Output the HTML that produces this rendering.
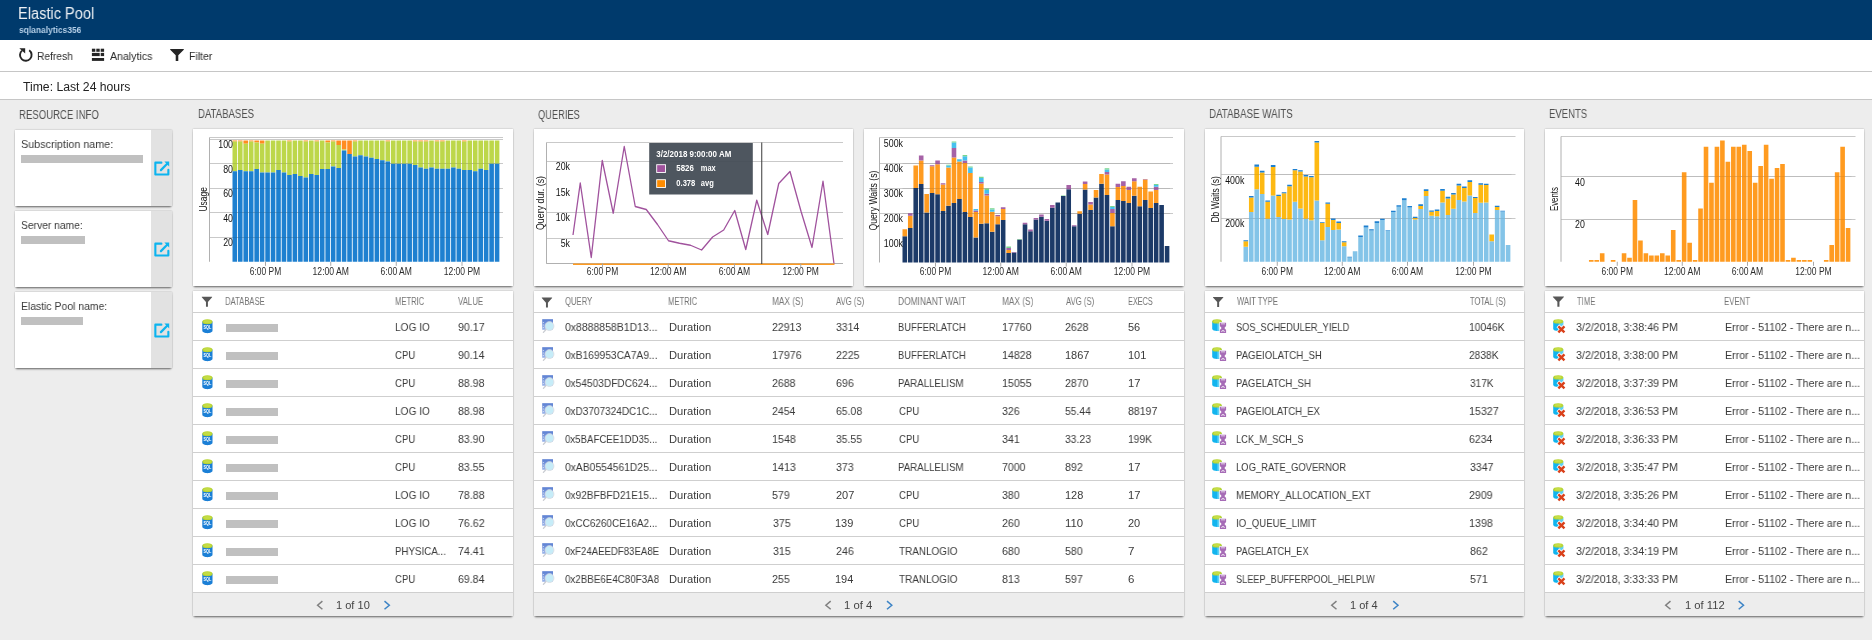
<!DOCTYPE html>
<html lang="en"><head><meta charset="utf-8"><title>Elastic Pool - sqlanalytics356</title>
<style>
html,body{margin:0;padding:0;}
body{width:1872px;height:640px;overflow:hidden;background:#ededed;font-family:"Liberation Sans",sans-serif;position:relative;}
.t{position:absolute;white-space:nowrap;line-height:1;transform-origin:0 0;display:block;}
.abs{position:absolute;}
#hdr{left:0;top:0;width:1872px;height:40px;background:#003a6c;}
#tool{left:0;top:40px;width:1872px;height:31px;background:#fff;border-bottom:1px solid #c6c6c6;}
#timebar{left:0;top:72px;width:1872px;height:27px;background:#fff;border-bottom:1px solid #c6c6c6;}
.panel{position:absolute;background:#fff;box-shadow:0 2px 2px -1px rgba(0,0,0,.55),0 0 1.5px rgba(0,0,0,.3);}
.row{position:absolute;left:0;height:27px;border-top:1px solid #cfcfcf;}
.pager{position:absolute;left:0;background:#ededed;border-top:1px solid #cfcfcf;}
.bar{position:absolute;background:#c0c0c0;}
svg{position:absolute;overflow:visible;}
#app{position:absolute;left:0;top:0;width:1872px;height:640px;will-change:transform;}
.t{will-change:transform;}
</style></head><body><div id="app">
<div id="hdr" class="abs">
<span class="t" style="left:18.30px;top:6.00px;font-size:16px;color:rgba(255,255,255,.93);transform:scaleX(0.9112);">Elastic Pool</span>
<span class="t" style="left:18.70px;top:25.00px;font-size:9.6px;color:#b4cfe8;transform:scaleX(0.8791);font-weight:bold;">sqlanalytics356</span>
</div>
<div id="tool" class="abs"></div>
<svg class="abs" style="left:18px;top:47px" width="16" height="16" viewBox="18 47 16 16">
<path d="M29.2 50.3 A5.8 5.8 0 1 1 22.0 50.6" fill="none" stroke="#252525" stroke-width="1.9"/>
<path d="M19.3 48.2 L25.2 48.2 L25.2 53.6 Z" fill="#252525"/></svg>
<span class="t" style="left:37.36px;top:51.00px;font-size:11px;color:#2a2a2a;transform:scaleX(0.9295);">Refresh</span>
<svg class="abs" style="left:91px;top:48px" width="14" height="14" viewBox="91 48 14 14" fill="#252525">
<rect x="91.9" y="48.7" width="3.4" height="3.1"/><rect x="96.3" y="48.7" width="3.4" height="3.1"/><rect x="100.7" y="48.7" width="3.4" height="3.1"/>
<rect x="91.9" y="52.9" width="7.8" height="3.2"/><rect x="100.7" y="52.9" width="3.4" height="3.2"/>
<rect x="91.9" y="58.0" width="12.2" height="2.9"/></svg>
<span class="t" style="left:110.08px;top:51.00px;font-size:11px;color:#2a2a2a;transform:scaleX(0.9633);">Analytics</span>
<svg class="abs" style="left:0;top:0" width="1" height="1"><path d="M170.20 49.10 L183.80 49.10 L183.80 49.69 L178.29 55.24 L178.29 60.90 L175.71 60.90 L175.71 55.24 L170.20 49.69 Z" fill="#252525"/></svg>
<span class="t" style="left:188.74px;top:51.00px;font-size:11px;color:#2a2a2a;transform:scaleX(0.9546);">Filter</span>
<div id="timebar" class="abs"></div>
<span class="t" style="left:23.13px;top:81.00px;font-size:12px;color:#222;transform:scaleX(1.0162);">Time: Last 24 hours</span>
<span class="t" style="left:19.01px;top:109.00px;font-size:12px;color:#505050;transform:scaleX(0.7984);">RESOURCE INFO</span>
<span class="t" style="left:197.61px;top:108.00px;font-size:12px;color:#505050;transform:scaleX(0.7975);">DATABASES</span>
<span class="t" style="left:538.06px;top:109.00px;font-size:12px;color:#505050;transform:scaleX(0.7732);">QUERIES</span>
<span class="t" style="left:1208.80px;top:108.00px;font-size:12px;color:#505050;transform:scaleX(0.8121);">DATABASE WAITS</span>
<span class="t" style="left:1548.62px;top:108.00px;font-size:12px;color:#505050;transform:scaleX(0.7939);">EVENTS</span>
<div class="panel" style="left:15px;top:130px;width:157px;height:76px;"><div class="abs" style="left:136px;top:0;width:21px;height:76px;background:#e2e2e2"></div></div>
<span class="t" style="left:21.11px;top:139.00px;font-size:11.5px;color:#3a3a3a;transform:scaleX(0.9373);">Subscription name:</span>
<div class="bar" style="left:21px;top:155px;width:122px;height:7.5px"></div>
<svg class="abs" style="left:154.2px;top:160.5px" width="17" height="16" viewBox="0 0 17 16"><path d="M7.4 1.65 H1.35 V13.55 H14.35 V8.8" fill="none" stroke="#0cb4ef" stroke-width="2.1" stroke-linejoin="round" stroke-linecap="round"/><path d="M6.9 9.1 L13.2 2.8" fill="none" stroke="#0cb4ef" stroke-width="2.2" stroke-linecap="round"/><path d="M10.4 0.6 H15.2 V5.4 Z" fill="#0cb4ef"/></svg>
<div class="panel" style="left:15px;top:211px;width:157px;height:76px;"><div class="abs" style="left:136px;top:0;width:21px;height:76px;background:#e2e2e2"></div></div>
<span class="t" style="left:21.13px;top:220.00px;font-size:11.5px;color:#3a3a3a;transform:scaleX(0.8939);">Server name:</span>
<div class="bar" style="left:21px;top:236px;width:63.9px;height:7.5px"></div>
<svg class="abs" style="left:154.2px;top:241.5px" width="17" height="16" viewBox="0 0 17 16"><path d="M7.4 1.65 H1.35 V13.55 H14.35 V8.8" fill="none" stroke="#0cb4ef" stroke-width="2.1" stroke-linejoin="round" stroke-linecap="round"/><path d="M6.9 9.1 L13.2 2.8" fill="none" stroke="#0cb4ef" stroke-width="2.2" stroke-linecap="round"/><path d="M10.4 0.6 H15.2 V5.4 Z" fill="#0cb4ef"/></svg>
<div class="panel" style="left:15px;top:292px;width:157px;height:76px;"><div class="abs" style="left:136px;top:0;width:21px;height:76px;background:#e2e2e2"></div></div>
<span class="t" style="left:20.75px;top:301.00px;font-size:11.5px;color:#3a3a3a;transform:scaleX(0.9051);">Elastic Pool name:</span>
<div class="bar" style="left:21px;top:317px;width:61.7px;height:7.5px"></div>
<svg class="abs" style="left:154.2px;top:322.5px" width="17" height="16" viewBox="0 0 17 16"><path d="M7.4 1.65 H1.35 V13.55 H14.35 V8.8" fill="none" stroke="#0cb4ef" stroke-width="2.1" stroke-linejoin="round" stroke-linecap="round"/><path d="M6.9 9.1 L13.2 2.8" fill="none" stroke="#0cb4ef" stroke-width="2.2" stroke-linecap="round"/><path d="M10.4 0.6 H15.2 V5.4 Z" fill="#0cb4ef"/></svg>
<div class="panel" style="left:193px;top:129px;width:320px;height:156.5px;"></div>
<svg class="abs" style="left:193px;top:129px" width="320" height="156.5" viewBox="193 129 320 156.5" font-family="Liberation Sans, sans-serif"><line x1="209.5" y1="137.5" x2="503" y2="137.5" stroke="#c9c9c9" stroke-width="1"/><line x1="209.5" y1="163.5" x2="503" y2="163.5" stroke="#c9c9c9" stroke-width="1"/><line x1="209.5" y1="188.5" x2="503" y2="188.5" stroke="#c9c9c9" stroke-width="1"/><line x1="209.5" y1="212.5" x2="503" y2="212.5" stroke="#c9c9c9" stroke-width="1"/><line x1="209.5" y1="237.5" x2="503" y2="237.5" stroke="#c9c9c9" stroke-width="1"/><line x1="209.5" y1="139.5" x2="503" y2="139.5" stroke="#c9c9c9" stroke-width="1"/><line x1="209.5" y1="137.5" x2="209.5" y2="261.75" stroke="#b0b0b0" stroke-width="1"/><rect x="232.50" y="140.50" width="4.6" height="1.00" fill="#ff8c21"/><rect x="232.50" y="141.50" width="4.6" height="29.75" fill="#bdd74a"/><rect x="232.50" y="171.25" width="4.6" height="90.50" fill="#1e80d0"/><rect x="237.96" y="140.50" width="4.6" height="1.00" fill="#ff8c21"/><rect x="237.96" y="141.50" width="4.6" height="28.50" fill="#bdd74a"/><rect x="237.96" y="170.00" width="4.6" height="91.75" fill="#1e80d0"/><rect x="243.43" y="140.50" width="4.6" height="3.20" fill="#ff8c21"/><rect x="243.43" y="143.70" width="4.6" height="27.55" fill="#bdd74a"/><rect x="243.43" y="171.25" width="4.6" height="90.50" fill="#1e80d0"/><rect x="248.89" y="140.50" width="4.6" height="1.00" fill="#ff8c21"/><rect x="248.89" y="141.50" width="4.6" height="29.75" fill="#bdd74a"/><rect x="248.89" y="171.25" width="4.6" height="90.50" fill="#1e80d0"/><rect x="254.36" y="140.50" width="4.6" height="2.00" fill="#ff8c21"/><rect x="254.36" y="142.50" width="4.6" height="26.50" fill="#bdd74a"/><rect x="254.36" y="169.00" width="4.6" height="92.75" fill="#1e80d0"/><rect x="259.82" y="140.50" width="4.6" height="3.20" fill="#ff8c21"/><rect x="259.82" y="143.70" width="4.6" height="28.80" fill="#bdd74a"/><rect x="259.82" y="172.50" width="4.6" height="89.25" fill="#1e80d0"/><rect x="265.28" y="140.50" width="4.6" height="32.00" fill="#bdd74a"/><rect x="265.28" y="172.50" width="4.6" height="89.25" fill="#1e80d0"/><rect x="270.75" y="140.50" width="4.6" height="32.00" fill="#bdd74a"/><rect x="270.75" y="172.50" width="4.6" height="89.25" fill="#1e80d0"/><rect x="276.21" y="140.50" width="4.6" height="29.50" fill="#bdd74a"/><rect x="276.21" y="170.00" width="4.6" height="91.75" fill="#1e80d0"/><rect x="281.68" y="140.50" width="4.6" height="32.00" fill="#bdd74a"/><rect x="281.68" y="172.50" width="4.6" height="89.25" fill="#1e80d0"/><rect x="287.14" y="140.50" width="4.6" height="1.00" fill="#ff8c21"/><rect x="287.14" y="141.50" width="4.6" height="33.50" fill="#bdd74a"/><rect x="287.14" y="175.00" width="4.6" height="86.75" fill="#1e80d0"/><rect x="292.60" y="140.50" width="4.6" height="33.50" fill="#bdd74a"/><rect x="292.60" y="174.00" width="4.6" height="87.75" fill="#1e80d0"/><rect x="298.07" y="140.50" width="4.6" height="35.50" fill="#bdd74a"/><rect x="298.07" y="176.00" width="4.6" height="85.75" fill="#1e80d0"/><rect x="303.53" y="140.50" width="4.6" height="1.00" fill="#ff8c21"/><rect x="303.53" y="141.50" width="4.6" height="36.00" fill="#bdd74a"/><rect x="303.53" y="177.50" width="4.6" height="84.25" fill="#1e80d0"/><rect x="309.00" y="140.50" width="4.6" height="33.50" fill="#bdd74a"/><rect x="309.00" y="174.00" width="4.6" height="87.75" fill="#1e80d0"/><rect x="314.46" y="140.50" width="4.6" height="1.00" fill="#ff8c21"/><rect x="314.46" y="141.50" width="4.6" height="33.50" fill="#bdd74a"/><rect x="314.46" y="175.00" width="4.6" height="86.75" fill="#1e80d0"/><rect x="319.92" y="140.50" width="4.6" height="28.50" fill="#bdd74a"/><rect x="319.92" y="169.00" width="4.6" height="92.75" fill="#1e80d0"/><rect x="325.39" y="140.50" width="4.6" height="2.00" fill="#ff8c21"/><rect x="325.39" y="142.50" width="4.6" height="26.50" fill="#bdd74a"/><rect x="325.39" y="169.00" width="4.6" height="92.75" fill="#1e80d0"/><rect x="330.85" y="140.50" width="4.6" height="1.00" fill="#ff8c21"/><rect x="330.85" y="141.50" width="4.6" height="25.00" fill="#bdd74a"/><rect x="330.85" y="166.50" width="4.6" height="95.25" fill="#1e80d0"/><rect x="336.32" y="140.50" width="4.6" height="4.50" fill="#ff8c21"/><rect x="336.32" y="145.00" width="4.6" height="23.00" fill="#bdd74a"/><rect x="336.32" y="168.00" width="4.6" height="93.75" fill="#1e80d0"/><rect x="341.78" y="140.50" width="4.6" height="9.00" fill="#ff8c21"/><rect x="341.78" y="149.50" width="4.6" height="1.00" fill="#bdd74a"/><rect x="341.78" y="150.50" width="4.6" height="111.25" fill="#1e80d0"/><rect x="347.24" y="140.50" width="4.6" height="13.50" fill="#ff8c21"/><rect x="347.24" y="154.00" width="4.6" height="107.75" fill="#1e80d0"/><rect x="352.71" y="140.50" width="4.6" height="1.00" fill="#ff8c21"/><rect x="352.71" y="141.50" width="4.6" height="15.00" fill="#bdd74a"/><rect x="352.71" y="156.50" width="4.6" height="105.25" fill="#1e80d0"/><rect x="358.17" y="140.50" width="4.6" height="14.75" fill="#bdd74a"/><rect x="358.17" y="155.25" width="4.6" height="106.50" fill="#1e80d0"/><rect x="363.64" y="140.50" width="4.6" height="16.00" fill="#bdd74a"/><rect x="363.64" y="156.50" width="4.6" height="105.25" fill="#1e80d0"/><rect x="369.10" y="140.50" width="4.6" height="17.25" fill="#bdd74a"/><rect x="369.10" y="157.75" width="4.6" height="104.00" fill="#1e80d0"/><rect x="374.56" y="140.50" width="4.6" height="18.50" fill="#bdd74a"/><rect x="374.56" y="159.00" width="4.6" height="102.75" fill="#1e80d0"/><rect x="380.03" y="140.50" width="4.6" height="19.75" fill="#bdd74a"/><rect x="380.03" y="160.25" width="4.6" height="101.50" fill="#1e80d0"/><rect x="385.49" y="140.50" width="4.6" height="1.00" fill="#ff8c21"/><rect x="385.49" y="141.50" width="4.6" height="20.00" fill="#bdd74a"/><rect x="385.49" y="161.50" width="4.6" height="100.25" fill="#1e80d0"/><rect x="390.96" y="140.50" width="4.6" height="23.25" fill="#bdd74a"/><rect x="390.96" y="163.75" width="4.6" height="98.00" fill="#1e80d0"/><rect x="396.42" y="140.50" width="4.6" height="23.25" fill="#bdd74a"/><rect x="396.42" y="163.75" width="4.6" height="98.00" fill="#1e80d0"/><rect x="401.88" y="140.50" width="4.6" height="23.25" fill="#bdd74a"/><rect x="401.88" y="163.75" width="4.6" height="98.00" fill="#1e80d0"/><rect x="407.35" y="140.50" width="4.6" height="23.25" fill="#bdd74a"/><rect x="407.35" y="163.75" width="4.6" height="98.00" fill="#1e80d0"/><rect x="412.81" y="140.50" width="4.6" height="1.00" fill="#ff8c21"/><rect x="412.81" y="141.50" width="4.6" height="23.50" fill="#bdd74a"/><rect x="412.81" y="165.00" width="4.6" height="96.75" fill="#1e80d0"/><rect x="418.28" y="140.50" width="4.6" height="1.00" fill="#ff8c21"/><rect x="418.28" y="141.50" width="4.6" height="26.00" fill="#bdd74a"/><rect x="418.28" y="167.50" width="4.6" height="94.25" fill="#1e80d0"/><rect x="423.74" y="140.50" width="4.6" height="1.00" fill="#ff8c21"/><rect x="423.74" y="141.50" width="4.6" height="27.25" fill="#bdd74a"/><rect x="423.74" y="168.75" width="4.6" height="93.00" fill="#1e80d0"/><rect x="429.20" y="140.50" width="4.6" height="27.00" fill="#bdd74a"/><rect x="429.20" y="167.50" width="4.6" height="94.25" fill="#1e80d0"/><rect x="434.67" y="140.50" width="4.6" height="1.00" fill="#ff8c21"/><rect x="434.67" y="141.50" width="4.6" height="27.25" fill="#bdd74a"/><rect x="434.67" y="168.75" width="4.6" height="93.00" fill="#1e80d0"/><rect x="440.13" y="140.50" width="4.6" height="1.00" fill="#ff8c21"/><rect x="440.13" y="141.50" width="4.6" height="27.25" fill="#bdd74a"/><rect x="440.13" y="168.75" width="4.6" height="93.00" fill="#1e80d0"/><rect x="445.60" y="140.50" width="4.6" height="28.25" fill="#bdd74a"/><rect x="445.60" y="168.75" width="4.6" height="93.00" fill="#1e80d0"/><rect x="451.06" y="140.50" width="4.6" height="27.00" fill="#bdd74a"/><rect x="451.06" y="167.50" width="4.6" height="94.25" fill="#1e80d0"/><rect x="456.52" y="140.50" width="4.6" height="28.25" fill="#bdd74a"/><rect x="456.52" y="168.75" width="4.6" height="93.00" fill="#1e80d0"/><rect x="461.99" y="140.50" width="4.6" height="1.00" fill="#ff8c21"/><rect x="461.99" y="141.50" width="4.6" height="28.50" fill="#bdd74a"/><rect x="461.99" y="170.00" width="4.6" height="91.75" fill="#1e80d0"/><rect x="467.45" y="140.50" width="4.6" height="29.50" fill="#bdd74a"/><rect x="467.45" y="170.00" width="4.6" height="91.75" fill="#1e80d0"/><rect x="472.92" y="140.50" width="4.6" height="30.75" fill="#bdd74a"/><rect x="472.92" y="171.25" width="4.6" height="90.50" fill="#1e80d0"/><rect x="478.38" y="140.50" width="4.6" height="28.25" fill="#bdd74a"/><rect x="478.38" y="168.75" width="4.6" height="93.00" fill="#1e80d0"/><rect x="483.84" y="140.50" width="4.6" height="29.50" fill="#bdd74a"/><rect x="483.84" y="170.00" width="4.6" height="91.75" fill="#1e80d0"/><rect x="489.31" y="140.50" width="4.6" height="23.25" fill="#bdd74a"/><rect x="489.31" y="163.75" width="4.6" height="98.00" fill="#1e80d0"/><rect x="494.77" y="140.50" width="4.6" height="23.25" fill="#bdd74a"/><rect x="494.77" y="163.75" width="4.6" height="98.00" fill="#1e80d0"/><line x1="232.5" y1="163.5" x2="500" y2="163.5" stroke="#000" stroke-opacity="0.08" stroke-width="1"/><line x1="232.5" y1="188.5" x2="500" y2="188.5" stroke="#000" stroke-opacity="0.08" stroke-width="1"/><line x1="232.5" y1="212.5" x2="500" y2="212.5" stroke="#000" stroke-opacity="0.08" stroke-width="1"/><line x1="232.5" y1="237.5" x2="500" y2="237.5" stroke="#000" stroke-opacity="0.08" stroke-width="1"/><text x="218.27" y="148.00" font-size="10.2" fill="#111" textLength="14.73" lengthAdjust="spacingAndGlyphs">100</text><text x="223.18" y="172.50" font-size="10.2" fill="#111" textLength="9.82" lengthAdjust="spacingAndGlyphs">80</text><text x="223.18" y="197.00" font-size="10.2" fill="#111" textLength="9.82" lengthAdjust="spacingAndGlyphs">60</text><text x="223.18" y="221.75" font-size="10.2" fill="#111" textLength="9.82" lengthAdjust="spacingAndGlyphs">40</text><text x="223.18" y="245.75" font-size="10.2" fill="#111" textLength="9.82" lengthAdjust="spacingAndGlyphs">20</text><text transform="translate(207.05 211.55) rotate(-90)" font-size="10" fill="#111" textLength="24.50" lengthAdjust="spacingAndGlyphs">Usage</text><text x="249.80" y="274.90" font-size="10" fill="#2c2c2c" textLength="31.40" lengthAdjust="spacingAndGlyphs">6:00 PM</text><line x1="265.5" y1="261.75" x2="265.5" y2="265.85" stroke="#a8a8a8" stroke-width="1"/><text x="312.55" y="274.90" font-size="10" fill="#2c2c2c" textLength="36.40" lengthAdjust="spacingAndGlyphs">12:00 AM</text><line x1="330.75" y1="261.75" x2="330.75" y2="265.85" stroke="#a8a8a8" stroke-width="1"/><text x="380.55" y="274.90" font-size="10" fill="#2c2c2c" textLength="31.40" lengthAdjust="spacingAndGlyphs">6:00 AM</text><line x1="396.25" y1="261.75" x2="396.25" y2="265.85" stroke="#a8a8a8" stroke-width="1"/><text x="443.80" y="274.90" font-size="10" fill="#2c2c2c" textLength="36.40" lengthAdjust="spacingAndGlyphs">12:00 PM</text><line x1="462" y1="261.75" x2="462" y2="265.85" stroke="#a8a8a8" stroke-width="1"/></svg>
<div class="panel" style="left:534px;top:129px;width:319px;height:156.5px;"></div>
<svg class="abs" style="left:534px;top:129px" width="320" height="156.5" viewBox="534 129 320 156.5" font-family="Liberation Sans, sans-serif"><line x1="546.5" y1="142.5" x2="843" y2="142.5" stroke="#c9c9c9" stroke-width="1"/><line x1="546.5" y1="161.5" x2="843" y2="161.5" stroke="#c9c9c9" stroke-width="1"/><line x1="546.5" y1="212.5" x2="843" y2="212.5" stroke="#c9c9c9" stroke-width="1"/><line x1="546.5" y1="238.5" x2="843" y2="238.5" stroke="#c9c9c9" stroke-width="1"/><line x1="546.5" y1="142.5" x2="546.5" y2="263.75" stroke="#b0b0b0" stroke-width="1"/><line x1="546.5" y1="263.5" x2="843" y2="263.5" stroke="#b0b0b0" stroke-width="1"/><polyline fill="none" stroke="#a0529d" stroke-width="1.3" stroke-linejoin="round" points="573,235 580.25,183 591.25,257.5 602.25,160.5 613.25,213.25 624.25,146.5 635.25,206.5 646.25,209.5 657.5,224.5 668.5,240.75 679.5,243.25 690.5,245.25 701.6,250 712.6,237 723.7,230 734.75,210.5 745.75,249.5 756.75,200.25 767.75,234.5 778.75,183.5 790,171.5 801,211.25 812,247.5 823,181.25 834,263.75"/><line x1="573" y1="264.2" x2="834.5" y2="264.2" stroke="#ff9b20" stroke-width="1.6"/><line x1="761.75" y1="142.5" x2="761.75" y2="264" stroke="#3a3a3a" stroke-width="1"/><text x="555.77" y="170.00" font-size="10.2" fill="#111" textLength="14.23" lengthAdjust="spacingAndGlyphs">20k</text><text x="555.77" y="195.50" font-size="10.2" fill="#111" textLength="14.23" lengthAdjust="spacingAndGlyphs">15k</text><text x="555.77" y="221.25" font-size="10.2" fill="#111" textLength="14.23" lengthAdjust="spacingAndGlyphs">10k</text><text x="560.68" y="246.75" font-size="10.2" fill="#111" textLength="9.32" lengthAdjust="spacingAndGlyphs">5k</text><text transform="translate(543.80 230.00) rotate(-90)" font-size="10" fill="#111" textLength="54.00" lengthAdjust="spacingAndGlyphs">Query dur. (s)</text><text x="586.80" y="274.90" font-size="10" fill="#2c2c2c" textLength="31.40" lengthAdjust="spacingAndGlyphs">6:00 PM</text><line x1="602.5" y1="263.75" x2="602.5" y2="267.85" stroke="#a8a8a8" stroke-width="1"/><text x="650.05" y="274.90" font-size="10" fill="#2c2c2c" textLength="36.40" lengthAdjust="spacingAndGlyphs">12:00 AM</text><line x1="668.25" y1="263.75" x2="668.25" y2="267.85" stroke="#a8a8a8" stroke-width="1"/><text x="718.80" y="274.90" font-size="10" fill="#2c2c2c" textLength="31.40" lengthAdjust="spacingAndGlyphs">6:00 AM</text><line x1="734.5" y1="263.75" x2="734.5" y2="267.85" stroke="#a8a8a8" stroke-width="1"/><text x="782.55" y="274.90" font-size="10" fill="#2c2c2c" textLength="36.40" lengthAdjust="spacingAndGlyphs">12:00 PM</text><line x1="800.75" y1="263.75" x2="800.75" y2="267.85" stroke="#a8a8a8" stroke-width="1"/><rect x="649.2" y="143" width="103.6" height="51.5" fill="#454d56" fill-opacity="0.95"/><text x="656.30" y="156.80" font-size="8.5" fill="#fff" textLength="75.00" lengthAdjust="spacingAndGlyphs" font-weight="bold">3/2/2018 9:00:00 AM</text><rect x="656.7" y="164.7" width="8.8" height="7.8" fill="#a0529d" stroke="#fff" stroke-width="0.9"/><rect x="656.7" y="179.7" width="8.8" height="7.8" fill="#ff8c00" stroke="#fff" stroke-width="0.9"/><text x="676.30" y="171.00" font-size="8.5" fill="#fff" textLength="17.50" lengthAdjust="spacingAndGlyphs" font-weight="bold">5826</text><text x="700.80" y="171.00" font-size="8.5" fill="#fff" textLength="14.90" lengthAdjust="spacingAndGlyphs" font-weight="bold">max</text><text x="676.30" y="185.90" font-size="8.5" fill="#fff" textLength="19.00" lengthAdjust="spacingAndGlyphs" font-weight="bold">0.378</text><text x="700.80" y="185.90" font-size="8.5" fill="#fff" textLength="13.00" lengthAdjust="spacingAndGlyphs" font-weight="bold">avg</text></svg>
<div class="panel" style="left:864px;top:129px;width:320px;height:156.5px;"></div>
<svg class="abs" style="left:864px;top:129px" width="320" height="156.5" viewBox="864 129 320 156.5" font-family="Liberation Sans, sans-serif"><line x1="879.5" y1="137.5" x2="1173" y2="137.5" stroke="#c9c9c9" stroke-width="1"/><line x1="879.5" y1="163.5" x2="1173" y2="163.5" stroke="#c9c9c9" stroke-width="1"/><line x1="879.5" y1="188.5" x2="1173" y2="188.5" stroke="#c9c9c9" stroke-width="1"/><line x1="879.5" y1="213.5" x2="1173" y2="213.5" stroke="#c9c9c9" stroke-width="1"/><line x1="879.5" y1="137.5" x2="879.5" y2="262.5" stroke="#b0b0b0" stroke-width="1"/><rect x="902.50" y="236.25" width="4.6" height="26.25" fill="#1c3a68"/><rect x="902.50" y="229.25" width="4.6" height="7.00" fill="#ff9b20"/><rect x="907.96" y="228.00" width="4.6" height="34.50" fill="#1c3a68"/><rect x="907.96" y="215.75" width="4.6" height="12.25" fill="#ff9b20"/><rect x="907.96" y="213.25" width="4.6" height="2.50" fill="#a662a6"/><rect x="913.43" y="188.00" width="4.6" height="74.50" fill="#1c3a68"/><rect x="913.43" y="165.50" width="4.6" height="22.50" fill="#ff9b20"/><rect x="918.89" y="184.00" width="4.6" height="78.50" fill="#1c3a68"/><rect x="918.89" y="160.50" width="4.6" height="23.50" fill="#ff9b20"/><rect x="918.89" y="155.50" width="4.6" height="5.00" fill="#a662a6"/><rect x="924.36" y="212.50" width="4.6" height="50.00" fill="#1c3a68"/><rect x="924.36" y="194.00" width="4.6" height="18.50" fill="#ff9b20"/><rect x="929.82" y="193.00" width="4.6" height="69.50" fill="#1c3a68"/><rect x="929.82" y="166.25" width="4.6" height="26.75" fill="#ff9b20"/><rect x="929.82" y="165.25" width="4.6" height="1.00" fill="#a662a6"/><rect x="935.28" y="194.25" width="4.6" height="68.25" fill="#1c3a68"/><rect x="935.28" y="164.25" width="4.6" height="30.00" fill="#ff9b20"/><rect x="935.28" y="160.50" width="4.6" height="3.75" fill="#a662a6"/><rect x="940.75" y="211.00" width="4.6" height="51.50" fill="#1c3a68"/><rect x="940.75" y="184.50" width="4.6" height="26.50" fill="#ff9b20"/><rect x="940.75" y="183.25" width="4.6" height="1.25" fill="#a662a6"/><rect x="946.21" y="205.75" width="4.6" height="56.75" fill="#1c3a68"/><rect x="946.21" y="167.50" width="4.6" height="38.25" fill="#ff9b20"/><rect x="946.21" y="165.50" width="4.6" height="2.00" fill="#45c1ee"/><rect x="946.21" y="164.75" width="4.6" height="0.75" fill="#78d68c"/><rect x="951.68" y="203.00" width="4.6" height="59.50" fill="#1c3a68"/><rect x="951.68" y="157.50" width="4.6" height="45.50" fill="#ff9b20"/><rect x="951.68" y="148.00" width="4.6" height="9.50" fill="#a662a6"/><rect x="951.68" y="142.50" width="4.6" height="5.50" fill="#45c1ee"/><rect x="951.68" y="141.50" width="4.6" height="1.00" fill="#78d68c"/><rect x="957.14" y="199.00" width="4.6" height="63.50" fill="#1c3a68"/><rect x="957.14" y="161.50" width="4.6" height="37.50" fill="#ff9b20"/><rect x="957.14" y="159.25" width="4.6" height="2.25" fill="#45c1ee"/><rect x="962.60" y="212.00" width="4.6" height="50.50" fill="#1c3a68"/><rect x="962.60" y="163.00" width="4.6" height="49.00" fill="#ff9b20"/><rect x="962.60" y="160.50" width="4.6" height="2.50" fill="#a662a6"/><rect x="962.60" y="156.25" width="4.6" height="4.25" fill="#45c1ee"/><rect x="962.60" y="155.00" width="4.6" height="1.25" fill="#78d68c"/><rect x="968.07" y="217.00" width="4.6" height="45.50" fill="#1c3a68"/><rect x="968.07" y="173.00" width="4.6" height="44.00" fill="#ff9b20"/><rect x="968.07" y="167.50" width="4.6" height="5.50" fill="#45c1ee"/><rect x="968.07" y="166.50" width="4.6" height="1.00" fill="#78d68c"/><rect x="973.53" y="237.50" width="4.6" height="25.00" fill="#1c3a68"/><rect x="973.53" y="212.00" width="4.6" height="25.50" fill="#ff9b20"/><rect x="973.53" y="210.50" width="4.6" height="1.50" fill="#a662a6"/><rect x="973.53" y="209.00" width="4.6" height="1.50" fill="#45c1ee"/><rect x="979.00" y="223.75" width="4.6" height="38.75" fill="#1c3a68"/><rect x="979.00" y="183.50" width="4.6" height="40.25" fill="#ff9b20"/><rect x="979.00" y="182.00" width="4.6" height="1.50" fill="#a662a6"/><rect x="979.00" y="178.00" width="4.6" height="4.00" fill="#45c1ee"/><rect x="979.00" y="176.75" width="4.6" height="1.25" fill="#78d68c"/><rect x="984.46" y="223.25" width="4.6" height="39.25" fill="#1c3a68"/><rect x="984.46" y="195.50" width="4.6" height="27.75" fill="#ff9b20"/><rect x="984.46" y="193.75" width="4.6" height="1.75" fill="#a662a6"/><rect x="984.46" y="190.00" width="4.6" height="3.75" fill="#45c1ee"/><rect x="984.46" y="188.50" width="4.6" height="1.50" fill="#78d68c"/><rect x="989.92" y="231.75" width="4.6" height="30.75" fill="#1c3a68"/><rect x="989.92" y="211.75" width="4.6" height="20.00" fill="#ff9b20"/><rect x="989.92" y="209.50" width="4.6" height="2.25" fill="#45c1ee"/><rect x="989.92" y="208.25" width="4.6" height="1.25" fill="#78d68c"/><rect x="995.39" y="224.25" width="4.6" height="38.25" fill="#1c3a68"/><rect x="995.39" y="216.25" width="4.6" height="8.00" fill="#ff9b20"/><rect x="995.39" y="215.00" width="4.6" height="1.25" fill="#a662a6"/><rect x="1000.85" y="220.00" width="4.6" height="42.50" fill="#1c3a68"/><rect x="1000.85" y="209.00" width="4.6" height="11.00" fill="#ff9b20"/><rect x="1000.85" y="207.25" width="4.6" height="1.75" fill="#a662a6"/><rect x="1006.32" y="253.00" width="4.6" height="9.50" fill="#1c3a68"/><rect x="1006.32" y="250.00" width="4.6" height="3.00" fill="#ff9b20"/><rect x="1006.32" y="248.00" width="4.6" height="2.00" fill="#a662a6"/><rect x="1006.32" y="246.50" width="4.6" height="1.50" fill="#78d68c"/><rect x="1011.78" y="252.50" width="4.6" height="10.00" fill="#1c3a68"/><rect x="1011.78" y="252.00" width="4.6" height="0.50" fill="#a662a6"/><rect x="1017.24" y="239.50" width="4.6" height="23.00" fill="#1c3a68"/><rect x="1017.24" y="239.00" width="4.6" height="0.50" fill="#78d68c"/><rect x="1022.71" y="224.25" width="4.6" height="38.25" fill="#1c3a68"/><rect x="1022.71" y="222.75" width="4.6" height="1.50" fill="#a662a6"/><rect x="1028.17" y="231.25" width="4.6" height="31.25" fill="#1c3a68"/><rect x="1028.17" y="229.50" width="4.6" height="1.75" fill="#a662a6"/><rect x="1033.64" y="219.50" width="4.6" height="43.00" fill="#1c3a68"/><rect x="1033.64" y="218.00" width="4.6" height="1.50" fill="#a662a6"/><rect x="1039.10" y="216.75" width="4.6" height="45.75" fill="#1c3a68"/><rect x="1039.10" y="214.50" width="4.6" height="2.25" fill="#a662a6"/><rect x="1044.56" y="220.75" width="4.6" height="41.75" fill="#1c3a68"/><rect x="1044.56" y="219.00" width="4.6" height="1.75" fill="#a662a6"/><rect x="1050.03" y="207.75" width="4.6" height="54.75" fill="#1c3a68"/><rect x="1050.03" y="205.00" width="4.6" height="2.75" fill="#a662a6"/><rect x="1055.49" y="202.50" width="4.6" height="60.00" fill="#1c3a68"/><rect x="1060.96" y="196.00" width="4.6" height="66.50" fill="#1c3a68"/><rect x="1060.96" y="195.50" width="4.6" height="0.50" fill="#78d68c"/><rect x="1066.42" y="189.25" width="4.6" height="73.25" fill="#1c3a68"/><rect x="1066.42" y="185.00" width="4.6" height="4.25" fill="#a662a6"/><rect x="1071.88" y="226.25" width="4.6" height="36.25" fill="#1c3a68"/><rect x="1071.88" y="225.25" width="4.6" height="1.00" fill="#a662a6"/><rect x="1077.35" y="213.75" width="4.6" height="48.75" fill="#1c3a68"/><rect x="1077.35" y="211.25" width="4.6" height="2.50" fill="#ff9b20"/><rect x="1082.81" y="189.50" width="4.6" height="73.00" fill="#1c3a68"/><rect x="1082.81" y="184.00" width="4.6" height="5.50" fill="#ff9b20"/><rect x="1082.81" y="181.50" width="4.6" height="2.50" fill="#a662a6"/><rect x="1088.28" y="210.00" width="4.6" height="52.50" fill="#1c3a68"/><rect x="1088.28" y="204.50" width="4.6" height="5.50" fill="#ff9b20"/><rect x="1088.28" y="202.00" width="4.6" height="2.50" fill="#a662a6"/><rect x="1093.74" y="197.50" width="4.6" height="65.00" fill="#1c3a68"/><rect x="1093.74" y="190.00" width="4.6" height="7.50" fill="#ff9b20"/><rect x="1099.20" y="183.75" width="4.6" height="78.75" fill="#1c3a68"/><rect x="1099.20" y="174.00" width="4.6" height="9.75" fill="#ff9b20"/><rect x="1104.67" y="195.00" width="4.6" height="67.50" fill="#1c3a68"/><rect x="1104.67" y="174.50" width="4.6" height="20.50" fill="#ff9b20"/><rect x="1104.67" y="172.00" width="4.6" height="2.50" fill="#a662a6"/><rect x="1104.67" y="169.50" width="4.6" height="2.50" fill="#45c1ee"/><rect x="1104.67" y="168.25" width="4.6" height="1.25" fill="#78d68c"/><rect x="1110.13" y="226.25" width="4.6" height="36.25" fill="#1c3a68"/><rect x="1110.13" y="213.00" width="4.6" height="13.25" fill="#ff9b20"/><rect x="1110.13" y="209.00" width="4.6" height="4.00" fill="#a662a6"/><rect x="1110.13" y="207.00" width="4.6" height="2.00" fill="#45c1ee"/><rect x="1110.13" y="206.00" width="4.6" height="1.00" fill="#78d68c"/><rect x="1115.60" y="200.00" width="4.6" height="62.50" fill="#1c3a68"/><rect x="1115.60" y="187.00" width="4.6" height="13.00" fill="#ff9b20"/><rect x="1115.60" y="183.75" width="4.6" height="3.25" fill="#a662a6"/><rect x="1121.06" y="201.00" width="4.6" height="61.50" fill="#1c3a68"/><rect x="1121.06" y="186.00" width="4.6" height="15.00" fill="#ff9b20"/><rect x="1121.06" y="181.25" width="4.6" height="4.75" fill="#a662a6"/><rect x="1126.52" y="203.00" width="4.6" height="59.50" fill="#1c3a68"/><rect x="1126.52" y="190.00" width="4.6" height="13.00" fill="#ff9b20"/><rect x="1126.52" y="186.75" width="4.6" height="3.25" fill="#a662a6"/><rect x="1131.99" y="195.75" width="4.6" height="66.75" fill="#1c3a68"/><rect x="1131.99" y="181.25" width="4.6" height="14.50" fill="#ff9b20"/><rect x="1131.99" y="178.25" width="4.6" height="3.00" fill="#a662a6"/><rect x="1137.45" y="206.25" width="4.6" height="56.25" fill="#1c3a68"/><rect x="1137.45" y="186.75" width="4.6" height="19.50" fill="#ff9b20"/><rect x="1142.92" y="200.00" width="4.6" height="62.50" fill="#1c3a68"/><rect x="1142.92" y="179.50" width="4.6" height="20.50" fill="#ff9b20"/><rect x="1142.92" y="179.00" width="4.6" height="0.50" fill="#a662a6"/><rect x="1148.38" y="208.00" width="4.6" height="54.50" fill="#1c3a68"/><rect x="1148.38" y="191.50" width="4.6" height="16.50" fill="#ff9b20"/><rect x="1153.84" y="203.00" width="4.6" height="59.50" fill="#1c3a68"/><rect x="1153.84" y="190.00" width="4.6" height="13.00" fill="#ff9b20"/><rect x="1153.84" y="186.75" width="4.6" height="3.25" fill="#a662a6"/><rect x="1153.84" y="185.00" width="4.6" height="1.75" fill="#45c1ee"/><rect x="1153.84" y="184.00" width="4.6" height="1.00" fill="#78d68c"/><rect x="1159.31" y="205.00" width="4.6" height="57.50" fill="#1c3a68"/><rect x="1164.77" y="246.00" width="4.6" height="16.50" fill="#1c3a68"/><line x1="902.5" y1="163.5" x2="1170" y2="163.5" stroke="#000" stroke-opacity="0.08" stroke-width="1"/><line x1="902.5" y1="188.5" x2="1170" y2="188.5" stroke="#000" stroke-opacity="0.08" stroke-width="1"/><line x1="902.5" y1="213.5" x2="1170" y2="213.5" stroke="#000" stroke-opacity="0.08" stroke-width="1"/><text x="883.86" y="147.00" font-size="10.2" fill="#111" textLength="19.14" lengthAdjust="spacingAndGlyphs">500k</text><text x="883.86" y="172.10" font-size="10.2" fill="#111" textLength="19.14" lengthAdjust="spacingAndGlyphs">400k</text><text x="883.86" y="197.00" font-size="10.2" fill="#111" textLength="19.14" lengthAdjust="spacingAndGlyphs">300k</text><text x="883.86" y="222.00" font-size="10.2" fill="#111" textLength="19.14" lengthAdjust="spacingAndGlyphs">200k</text><text x="883.86" y="247.00" font-size="10.2" fill="#111" textLength="19.14" lengthAdjust="spacingAndGlyphs">100k</text><text transform="translate(876.90 230.60) rotate(-90)" font-size="10" fill="#111" textLength="60.00" lengthAdjust="spacingAndGlyphs">Query Waits (s)</text><text x="919.80" y="274.90" font-size="10" fill="#2c2c2c" textLength="31.40" lengthAdjust="spacingAndGlyphs">6:00 PM</text><line x1="935.5" y1="262.5" x2="935.5" y2="266.6" stroke="#a8a8a8" stroke-width="1"/><text x="982.55" y="274.90" font-size="10" fill="#2c2c2c" textLength="36.40" lengthAdjust="spacingAndGlyphs">12:00 AM</text><line x1="1000.75" y1="262.5" x2="1000.75" y2="266.6" stroke="#a8a8a8" stroke-width="1"/><text x="1050.55" y="274.90" font-size="10" fill="#2c2c2c" textLength="31.40" lengthAdjust="spacingAndGlyphs">6:00 AM</text><line x1="1066.25" y1="262.5" x2="1066.25" y2="266.6" stroke="#a8a8a8" stroke-width="1"/><text x="1113.80" y="274.90" font-size="10" fill="#2c2c2c" textLength="36.40" lengthAdjust="spacingAndGlyphs">12:00 PM</text><line x1="1132" y1="262.5" x2="1132" y2="266.6" stroke="#a8a8a8" stroke-width="1"/></svg>
<div class="panel" style="left:1204.5px;top:129px;width:319.5px;height:156.5px;"></div>
<svg class="abs" style="left:1204.5px;top:129px" width="320" height="156.5" viewBox="1204.5 129 320 156.5" font-family="Liberation Sans, sans-serif"><line x1="1220.5" y1="136.5" x2="1515" y2="136.5" stroke="#c9c9c9" stroke-width="1"/><line x1="1220.5" y1="174.5" x2="1515" y2="174.5" stroke="#c9c9c9" stroke-width="1"/><line x1="1220.5" y1="218.5" x2="1515" y2="218.5" stroke="#c9c9c9" stroke-width="1"/><line x1="1220.5" y1="136.5" x2="1220.5" y2="261.75" stroke="#b0b0b0" stroke-width="1"/><rect x="1243.00" y="246.75" width="4.6" height="15.00" fill="#84c4e8"/><rect x="1243.00" y="241.25" width="4.6" height="5.50" fill="#fdb913"/><rect x="1243.00" y="240.25" width="4.6" height="1.00" fill="#1e80d0"/><rect x="1248.46" y="212.00" width="4.6" height="49.75" fill="#84c4e8"/><rect x="1248.46" y="197.50" width="4.6" height="14.50" fill="#fdb913"/><rect x="1248.46" y="196.00" width="4.6" height="1.50" fill="#1e80d0"/><rect x="1253.93" y="189.25" width="4.6" height="72.50" fill="#84c4e8"/><rect x="1253.93" y="166.75" width="4.6" height="22.50" fill="#fdb913"/><rect x="1253.93" y="164.50" width="4.6" height="2.25" fill="#1e80d0"/><rect x="1259.39" y="194.00" width="4.6" height="67.75" fill="#84c4e8"/><rect x="1259.39" y="172.50" width="4.6" height="21.50" fill="#fdb913"/><rect x="1259.39" y="170.75" width="4.6" height="1.75" fill="#1e80d0"/><rect x="1264.86" y="218.75" width="4.6" height="43.00" fill="#84c4e8"/><rect x="1264.86" y="201.75" width="4.6" height="17.00" fill="#fdb913"/><rect x="1264.86" y="200.50" width="4.6" height="1.25" fill="#1e80d0"/><rect x="1270.32" y="195.50" width="4.6" height="66.25" fill="#84c4e8"/><rect x="1270.32" y="167.00" width="4.6" height="28.50" fill="#fdb913"/><rect x="1270.32" y="165.00" width="4.6" height="2.00" fill="#1e80d0"/><rect x="1275.78" y="217.00" width="4.6" height="44.75" fill="#84c4e8"/><rect x="1275.78" y="196.00" width="4.6" height="21.00" fill="#fdb913"/><rect x="1275.78" y="194.75" width="4.6" height="1.25" fill="#1e80d0"/><rect x="1281.25" y="219.00" width="4.6" height="42.75" fill="#84c4e8"/><rect x="1281.25" y="193.25" width="4.6" height="25.75" fill="#fdb913"/><rect x="1281.25" y="192.25" width="4.6" height="1.00" fill="#1e80d0"/><rect x="1286.71" y="219.50" width="4.6" height="42.25" fill="#84c4e8"/><rect x="1286.71" y="186.25" width="4.6" height="33.25" fill="#fdb913"/><rect x="1286.71" y="184.75" width="4.6" height="1.50" fill="#1e80d0"/><rect x="1292.18" y="201.75" width="4.6" height="60.00" fill="#84c4e8"/><rect x="1292.18" y="170.25" width="4.6" height="31.50" fill="#fdb913"/><rect x="1292.18" y="169.00" width="4.6" height="1.25" fill="#1e80d0"/><rect x="1297.64" y="208.50" width="4.6" height="53.25" fill="#84c4e8"/><rect x="1297.64" y="171.50" width="4.6" height="37.00" fill="#fdb913"/><rect x="1297.64" y="170.25" width="4.6" height="1.25" fill="#1e80d0"/><rect x="1303.10" y="218.75" width="4.6" height="43.00" fill="#84c4e8"/><rect x="1303.10" y="176.50" width="4.6" height="42.25" fill="#fdb913"/><rect x="1303.10" y="175.00" width="4.6" height="1.50" fill="#1e80d0"/><rect x="1308.57" y="220.25" width="4.6" height="41.50" fill="#84c4e8"/><rect x="1308.57" y="177.25" width="4.6" height="43.00" fill="#fdb913"/><rect x="1308.57" y="176.00" width="4.6" height="1.25" fill="#1e80d0"/><rect x="1314.03" y="200.50" width="4.6" height="61.25" fill="#84c4e8"/><rect x="1314.03" y="142.50" width="4.6" height="58.00" fill="#fdb913"/><rect x="1314.03" y="141.00" width="4.6" height="1.50" fill="#1e80d0"/><rect x="1319.50" y="240.25" width="4.6" height="21.50" fill="#84c4e8"/><rect x="1319.50" y="223.00" width="4.6" height="17.25" fill="#fdb913"/><rect x="1319.50" y="222.25" width="4.6" height="0.75" fill="#1e80d0"/><rect x="1324.96" y="227.00" width="4.6" height="34.75" fill="#84c4e8"/><rect x="1324.96" y="203.75" width="4.6" height="23.25" fill="#fdb913"/><rect x="1324.96" y="202.50" width="4.6" height="1.25" fill="#1e80d0"/><rect x="1330.42" y="230.00" width="4.6" height="31.75" fill="#84c4e8"/><rect x="1330.42" y="220.00" width="4.6" height="10.00" fill="#fdb913"/><rect x="1330.42" y="218.50" width="4.6" height="1.50" fill="#1e80d0"/><rect x="1335.89" y="229.50" width="4.6" height="32.25" fill="#84c4e8"/><rect x="1335.89" y="223.00" width="4.6" height="6.50" fill="#fdb913"/><rect x="1335.89" y="221.50" width="4.6" height="1.50" fill="#1e80d0"/><rect x="1341.35" y="246.25" width="4.6" height="15.50" fill="#84c4e8"/><rect x="1341.35" y="242.25" width="4.6" height="4.00" fill="#fdb913"/><rect x="1341.35" y="241.25" width="4.6" height="1.00" fill="#1e80d0"/><rect x="1346.82" y="257.50" width="4.6" height="4.25" fill="#84c4e8"/><rect x="1346.82" y="256.75" width="4.6" height="0.75" fill="#1e80d0"/><rect x="1352.28" y="251.25" width="4.6" height="10.50" fill="#84c4e8"/><rect x="1357.74" y="237.00" width="4.6" height="24.75" fill="#84c4e8"/><rect x="1357.74" y="235.50" width="4.6" height="1.50" fill="#1e80d0"/><rect x="1363.21" y="227.50" width="4.6" height="34.25" fill="#84c4e8"/><rect x="1363.21" y="225.50" width="4.6" height="2.00" fill="#1e80d0"/><rect x="1368.67" y="230.50" width="4.6" height="31.25" fill="#84c4e8"/><rect x="1368.67" y="229.25" width="4.6" height="1.25" fill="#1e80d0"/><rect x="1374.14" y="223.00" width="4.6" height="38.75" fill="#84c4e8"/><rect x="1374.14" y="221.25" width="4.6" height="1.75" fill="#1e80d0"/><rect x="1379.60" y="220.00" width="4.6" height="41.75" fill="#84c4e8"/><rect x="1379.60" y="218.75" width="4.6" height="1.25" fill="#1e80d0"/><rect x="1385.06" y="230.50" width="4.6" height="31.25" fill="#84c4e8"/><rect x="1385.06" y="230.00" width="4.6" height="0.50" fill="#1e80d0"/><rect x="1390.53" y="212.00" width="4.6" height="49.75" fill="#84c4e8"/><rect x="1390.53" y="210.75" width="4.6" height="1.25" fill="#1e80d0"/><rect x="1395.99" y="206.75" width="4.6" height="55.00" fill="#84c4e8"/><rect x="1395.99" y="205.25" width="4.6" height="1.50" fill="#1e80d0"/><rect x="1401.46" y="200.25" width="4.6" height="61.50" fill="#84c4e8"/><rect x="1401.46" y="198.25" width="4.6" height="2.00" fill="#1e80d0"/><rect x="1406.92" y="207.50" width="4.6" height="54.25" fill="#84c4e8"/><rect x="1406.92" y="206.00" width="4.6" height="1.50" fill="#1e80d0"/><rect x="1412.38" y="219.50" width="4.6" height="42.25" fill="#84c4e8"/><rect x="1412.38" y="218.00" width="4.6" height="1.50" fill="#fdb913"/><rect x="1412.38" y="216.75" width="4.6" height="1.25" fill="#1e80d0"/><rect x="1417.85" y="209.00" width="4.6" height="52.75" fill="#84c4e8"/><rect x="1417.85" y="206.00" width="4.6" height="3.00" fill="#fdb913"/><rect x="1417.85" y="204.25" width="4.6" height="1.75" fill="#1e80d0"/><rect x="1423.31" y="196.00" width="4.6" height="65.75" fill="#84c4e8"/><rect x="1423.31" y="191.00" width="4.6" height="5.00" fill="#fdb913"/><rect x="1423.31" y="189.25" width="4.6" height="1.75" fill="#1e80d0"/><rect x="1428.78" y="215.75" width="4.6" height="46.00" fill="#84c4e8"/><rect x="1428.78" y="211.75" width="4.6" height="4.00" fill="#fdb913"/><rect x="1428.78" y="210.50" width="4.6" height="1.25" fill="#1e80d0"/><rect x="1434.24" y="216.25" width="4.6" height="45.50" fill="#84c4e8"/><rect x="1434.24" y="211.00" width="4.6" height="5.25" fill="#fdb913"/><rect x="1434.24" y="209.50" width="4.6" height="1.50" fill="#1e80d0"/><rect x="1439.70" y="202.50" width="4.6" height="59.25" fill="#84c4e8"/><rect x="1439.70" y="190.75" width="4.6" height="11.75" fill="#fdb913"/><rect x="1439.70" y="189.00" width="4.6" height="1.75" fill="#1e80d0"/><rect x="1445.17" y="215.00" width="4.6" height="46.75" fill="#84c4e8"/><rect x="1445.17" y="198.50" width="4.6" height="16.50" fill="#fdb913"/><rect x="1445.17" y="196.75" width="4.6" height="1.75" fill="#1e80d0"/><rect x="1450.63" y="208.75" width="4.6" height="53.00" fill="#84c4e8"/><rect x="1450.63" y="194.50" width="4.6" height="14.25" fill="#fdb913"/><rect x="1450.63" y="193.00" width="4.6" height="1.50" fill="#1e80d0"/><rect x="1456.10" y="200.00" width="4.6" height="61.75" fill="#84c4e8"/><rect x="1456.10" y="185.50" width="4.6" height="14.50" fill="#fdb913"/><rect x="1456.10" y="183.75" width="4.6" height="1.75" fill="#1e80d0"/><rect x="1461.56" y="201.50" width="4.6" height="60.25" fill="#84c4e8"/><rect x="1461.56" y="188.00" width="4.6" height="13.50" fill="#fdb913"/><rect x="1461.56" y="186.50" width="4.6" height="1.50" fill="#1e80d0"/><rect x="1467.02" y="195.50" width="4.6" height="66.25" fill="#84c4e8"/><rect x="1467.02" y="182.00" width="4.6" height="13.50" fill="#fdb913"/><rect x="1467.02" y="180.25" width="4.6" height="1.75" fill="#1e80d0"/><rect x="1472.49" y="213.00" width="4.6" height="48.75" fill="#84c4e8"/><rect x="1472.49" y="198.00" width="4.6" height="15.00" fill="#fdb913"/><rect x="1472.49" y="197.00" width="4.6" height="1.00" fill="#1e80d0"/><rect x="1477.95" y="202.75" width="4.6" height="59.00" fill="#84c4e8"/><rect x="1477.95" y="184.75" width="4.6" height="18.00" fill="#fdb913"/><rect x="1477.95" y="183.25" width="4.6" height="1.50" fill="#1e80d0"/><rect x="1483.42" y="202.50" width="4.6" height="59.25" fill="#84c4e8"/><rect x="1483.42" y="185.00" width="4.6" height="17.50" fill="#fdb913"/><rect x="1483.42" y="183.75" width="4.6" height="1.25" fill="#1e80d0"/><rect x="1488.88" y="241.25" width="4.6" height="20.50" fill="#84c4e8"/><rect x="1488.88" y="234.50" width="4.6" height="6.75" fill="#fdb913"/><rect x="1494.34" y="210.00" width="4.6" height="51.75" fill="#84c4e8"/><rect x="1494.34" y="207.00" width="4.6" height="3.00" fill="#fdb913"/><rect x="1494.34" y="205.75" width="4.6" height="1.25" fill="#1e80d0"/><rect x="1499.81" y="211.50" width="4.6" height="50.25" fill="#84c4e8"/><rect x="1499.81" y="210.75" width="4.6" height="0.75" fill="#1e80d0"/><rect x="1505.27" y="245.00" width="4.6" height="16.75" fill="#84c4e8"/><line x1="1243" y1="174.5" x2="1511" y2="174.5" stroke="#000" stroke-opacity="0.06" stroke-width="1"/><line x1="1243" y1="218.5" x2="1511" y2="218.5" stroke="#000" stroke-opacity="0.06" stroke-width="1"/><text x="1224.66" y="183.75" font-size="10.2" fill="#111" textLength="19.14" lengthAdjust="spacingAndGlyphs">400k</text><text x="1224.66" y="227.00" font-size="10.2" fill="#111" textLength="19.14" lengthAdjust="spacingAndGlyphs">200k</text><text transform="translate(1218.30 222.55) rotate(-90)" font-size="10" fill="#111" textLength="46.50" lengthAdjust="spacingAndGlyphs">Db Waits (s)</text><text x="1261.05" y="274.90" font-size="10" fill="#2c2c2c" textLength="31.40" lengthAdjust="spacingAndGlyphs">6:00 PM</text><line x1="1276.75" y1="261.75" x2="1276.75" y2="265.85" stroke="#a8a8a8" stroke-width="1"/><text x="1323.55" y="274.90" font-size="10" fill="#2c2c2c" textLength="36.40" lengthAdjust="spacingAndGlyphs">12:00 AM</text><line x1="1341.75" y1="261.75" x2="1341.75" y2="265.85" stroke="#a8a8a8" stroke-width="1"/><text x="1391.30" y="274.90" font-size="10" fill="#2c2c2c" textLength="31.40" lengthAdjust="spacingAndGlyphs">6:00 AM</text><line x1="1407" y1="261.75" x2="1407" y2="265.85" stroke="#a8a8a8" stroke-width="1"/><text x="1454.80" y="274.90" font-size="10" fill="#2c2c2c" textLength="36.40" lengthAdjust="spacingAndGlyphs">12:00 PM</text><line x1="1473" y1="261.75" x2="1473" y2="265.85" stroke="#a8a8a8" stroke-width="1"/></svg>
<div class="panel" style="left:1544.5px;top:129px;width:319.5px;height:156.5px;"></div>
<svg class="abs" style="left:1544.5px;top:129px" width="320" height="156.5" viewBox="1544.5 129 320 156.5" font-family="Liberation Sans, sans-serif"><line x1="1560.5" y1="136.5" x2="1855" y2="136.5" stroke="#c9c9c9" stroke-width="1"/><line x1="1560.5" y1="176.5" x2="1855" y2="176.5" stroke="#c9c9c9" stroke-width="1"/><line x1="1560.5" y1="219.5" x2="1855" y2="219.5" stroke="#c9c9c9" stroke-width="1"/><line x1="1560.5" y1="136.5" x2="1560.5" y2="261.75" stroke="#b0b0b0" stroke-width="1"/><rect x="1588.46" y="260.00" width="4.6" height="1.75" fill="#ff9b20"/><rect x="1593.93" y="260.00" width="4.6" height="1.75" fill="#ff9b20"/><rect x="1599.39" y="253.25" width="4.6" height="8.50" fill="#ff9b20"/><rect x="1610.32" y="260.00" width="4.6" height="1.75" fill="#ff9b20"/><rect x="1621.25" y="253.25" width="4.6" height="8.50" fill="#ff9b20"/><rect x="1626.71" y="257.75" width="4.6" height="4.00" fill="#ff9b20"/><rect x="1632.18" y="200.00" width="4.6" height="61.75" fill="#ff9b20"/><rect x="1637.64" y="240.50" width="4.6" height="21.25" fill="#ff9b20"/><rect x="1643.10" y="253.25" width="4.6" height="8.50" fill="#ff9b20"/><rect x="1648.57" y="255.50" width="4.6" height="6.25" fill="#ff9b20"/><rect x="1654.03" y="255.50" width="4.6" height="6.25" fill="#ff9b20"/><rect x="1659.50" y="253.25" width="4.6" height="8.50" fill="#ff9b20"/><rect x="1664.96" y="255.50" width="4.6" height="6.25" fill="#ff9b20"/><rect x="1670.42" y="230.00" width="4.6" height="31.75" fill="#ff9b20"/><rect x="1675.89" y="260.00" width="4.6" height="1.75" fill="#ff9b20"/><rect x="1681.35" y="172.25" width="4.6" height="89.50" fill="#ff9b20"/><rect x="1686.82" y="242.75" width="4.6" height="19.00" fill="#ff9b20"/><rect x="1692.28" y="260.00" width="4.6" height="1.75" fill="#ff9b20"/><rect x="1697.74" y="208.50" width="4.6" height="53.25" fill="#ff9b20"/><rect x="1703.21" y="146.75" width="4.6" height="115.00" fill="#ff9b20"/><rect x="1708.67" y="182.75" width="4.6" height="79.00" fill="#ff9b20"/><rect x="1714.14" y="146.75" width="4.6" height="115.00" fill="#ff9b20"/><rect x="1719.60" y="140.50" width="4.6" height="121.25" fill="#ff9b20"/><rect x="1725.06" y="161.75" width="4.6" height="100.00" fill="#ff9b20"/><rect x="1730.53" y="146.75" width="4.6" height="115.00" fill="#ff9b20"/><rect x="1735.99" y="146.75" width="4.6" height="115.00" fill="#ff9b20"/><rect x="1741.46" y="144.75" width="4.6" height="117.00" fill="#ff9b20"/><rect x="1746.92" y="151.00" width="4.6" height="110.75" fill="#ff9b20"/><rect x="1752.38" y="182.75" width="4.6" height="79.00" fill="#ff9b20"/><rect x="1757.85" y="166.00" width="4.6" height="95.75" fill="#ff9b20"/><rect x="1763.31" y="144.75" width="4.6" height="117.00" fill="#ff9b20"/><rect x="1768.78" y="178.75" width="4.6" height="83.00" fill="#ff9b20"/><rect x="1774.24" y="168.00" width="4.6" height="93.75" fill="#ff9b20"/><rect x="1779.70" y="164.00" width="4.6" height="97.75" fill="#ff9b20"/><rect x="1785.17" y="260.00" width="4.6" height="1.75" fill="#ff9b20"/><rect x="1790.63" y="257.75" width="4.6" height="4.00" fill="#ff9b20"/><rect x="1796.10" y="260.00" width="4.6" height="1.75" fill="#ff9b20"/><rect x="1801.56" y="260.00" width="4.6" height="1.75" fill="#ff9b20"/><rect x="1807.02" y="260.00" width="4.6" height="1.75" fill="#ff9b20"/><rect x="1823.42" y="260.00" width="4.6" height="1.75" fill="#ff9b20"/><rect x="1828.88" y="245.00" width="4.6" height="16.75" fill="#ff9b20"/><rect x="1834.34" y="172.25" width="4.6" height="89.50" fill="#ff9b20"/><rect x="1839.81" y="146.75" width="4.6" height="115.00" fill="#ff9b20"/><rect x="1845.27" y="228.00" width="4.6" height="33.75" fill="#ff9b20"/><line x1="1583" y1="176.5" x2="1851" y2="176.5" stroke="#000" stroke-opacity="0.06" stroke-width="1"/><line x1="1583" y1="219.5" x2="1851" y2="219.5" stroke="#000" stroke-opacity="0.06" stroke-width="1"/><text x="1574.48" y="185.50" font-size="10.2" fill="#111" textLength="9.82" lengthAdjust="spacingAndGlyphs">40</text><text x="1574.48" y="227.50" font-size="10.2" fill="#111" textLength="9.82" lengthAdjust="spacingAndGlyphs">20</text><text transform="translate(1557.55 211.10) rotate(-90)" font-size="10" fill="#111" textLength="24.00" lengthAdjust="spacingAndGlyphs">Events</text><text x="1601.05" y="274.90" font-size="10" fill="#2c2c2c" textLength="31.40" lengthAdjust="spacingAndGlyphs">6:00 PM</text><line x1="1616.75" y1="261.75" x2="1616.75" y2="265.85" stroke="#a8a8a8" stroke-width="1"/><text x="1663.55" y="274.90" font-size="10" fill="#2c2c2c" textLength="36.40" lengthAdjust="spacingAndGlyphs">12:00 AM</text><line x1="1681.75" y1="261.75" x2="1681.75" y2="265.85" stroke="#a8a8a8" stroke-width="1"/><text x="1731.30" y="274.90" font-size="10" fill="#2c2c2c" textLength="31.40" lengthAdjust="spacingAndGlyphs">6:00 AM</text><line x1="1747" y1="261.75" x2="1747" y2="265.85" stroke="#a8a8a8" stroke-width="1"/><text x="1794.80" y="274.90" font-size="10" fill="#2c2c2c" textLength="36.40" lengthAdjust="spacingAndGlyphs">12:00 PM</text><line x1="1813" y1="261.75" x2="1813" y2="265.85" stroke="#a8a8a8" stroke-width="1"/></svg>
<div class="panel" style="left:193px;top:291px;width:320px;height:325px;"><div class="row" style="top:21px;width:320px"></div><div class="row" style="top:49px;width:320px"></div><div class="row" style="top:77px;width:320px"></div><div class="row" style="top:105px;width:320px"></div><div class="row" style="top:133px;width:320px"></div><div class="row" style="top:161px;width:320px"></div><div class="row" style="top:189px;width:320px"></div><div class="row" style="top:217px;width:320px"></div><div class="row" style="top:245px;width:320px"></div><div class="row" style="top:273px;width:320px"></div><div class="pager" style="top:301px;width:320px;height:23px"></div></div>
<svg class="abs" style="left:0;top:0" width="1" height="1"><path d="M201.80 296.80 L212.10 296.80 L212.10 297.30 L207.93 302.00 L207.93 306.80 L205.97 306.80 L205.97 302.00 L201.80 297.30 Z" fill="#575757"/></svg>
<span class="t" style="left:224.87px;top:297.00px;font-size:10px;color:#757575;transform:scaleX(0.7665);">DATABASE</span>
<span class="t" style="left:395.07px;top:297.00px;font-size:10px;color:#757575;transform:scaleX(0.7649);">METRIC</span>
<span class="t" style="left:457.97px;top:297.00px;font-size:10px;color:#757575;transform:scaleX(0.7822);">VALUE</span>
<svg class="abs" style="left:201.7px;top:318.9px" width="11" height="14.5" viewBox="0 0 11 14.5" font-family="Liberation Sans, sans-serif"><path d="M0.3 2.6 V11.6 C0.3 13.4 3 14.2 5.4 14.2 C7.8 14.2 10.5 13.4 10.5 11.6 V2.6 Z" fill="#1b7fd6"/><ellipse cx="5.4" cy="2.7" rx="5.1" ry="2.5" fill="#b8d432"/><ellipse cx="5.4" cy="2.5" rx="3.6" ry="1.5" fill="#c4dc45"/><text x="1.5" y="10.4" font-size="4.6" font-weight="bold" fill="#fff" textLength="7.8" lengthAdjust="spacingAndGlyphs">SQL</text></svg>
<div class="bar" style="left:225.8px;top:324.2px;width:52px;height:7.6px"></div>
<span class="t" style="left:394.87px;top:322.00px;font-size:11px;color:#3a3a3a;transform:scaleX(0.9213);">LOG IO</span>
<span class="t" style="left:457.90px;top:322.00px;font-size:11px;color:#3a3a3a;transform:scaleX(0.9675);">90.17</span>
<svg class="abs" style="left:201.7px;top:346.9px" width="11" height="14.5" viewBox="0 0 11 14.5" font-family="Liberation Sans, sans-serif"><path d="M0.3 2.6 V11.6 C0.3 13.4 3 14.2 5.4 14.2 C7.8 14.2 10.5 13.4 10.5 11.6 V2.6 Z" fill="#1b7fd6"/><ellipse cx="5.4" cy="2.7" rx="5.1" ry="2.5" fill="#b8d432"/><ellipse cx="5.4" cy="2.5" rx="3.6" ry="1.5" fill="#c4dc45"/><text x="1.5" y="10.4" font-size="4.6" font-weight="bold" fill="#fff" textLength="7.8" lengthAdjust="spacingAndGlyphs">SQL</text></svg>
<div class="bar" style="left:225.8px;top:352.2px;width:52px;height:7.6px"></div>
<span class="t" style="left:395.21px;top:350.00px;font-size:11px;color:#3a3a3a;transform:scaleX(0.8754);">CPU</span>
<span class="t" style="left:457.91px;top:350.00px;font-size:11px;color:#3a3a3a;transform:scaleX(0.9592);">90.14</span>
<svg class="abs" style="left:201.7px;top:374.9px" width="11" height="14.5" viewBox="0 0 11 14.5" font-family="Liberation Sans, sans-serif"><path d="M0.3 2.6 V11.6 C0.3 13.4 3 14.2 5.4 14.2 C7.8 14.2 10.5 13.4 10.5 11.6 V2.6 Z" fill="#1b7fd6"/><ellipse cx="5.4" cy="2.7" rx="5.1" ry="2.5" fill="#b8d432"/><ellipse cx="5.4" cy="2.5" rx="3.6" ry="1.5" fill="#c4dc45"/><text x="1.5" y="10.4" font-size="4.6" font-weight="bold" fill="#fff" textLength="7.8" lengthAdjust="spacingAndGlyphs">SQL</text></svg>
<div class="bar" style="left:225.8px;top:380.2px;width:52px;height:7.6px"></div>
<span class="t" style="left:395.21px;top:378.00px;font-size:11px;color:#3a3a3a;transform:scaleX(0.8754);">CPU</span>
<span class="t" style="left:457.94px;top:378.00px;font-size:11px;color:#3a3a3a;transform:scaleX(0.9634);">88.98</span>
<svg class="abs" style="left:201.7px;top:402.9px" width="11" height="14.5" viewBox="0 0 11 14.5" font-family="Liberation Sans, sans-serif"><path d="M0.3 2.6 V11.6 C0.3 13.4 3 14.2 5.4 14.2 C7.8 14.2 10.5 13.4 10.5 11.6 V2.6 Z" fill="#1b7fd6"/><ellipse cx="5.4" cy="2.7" rx="5.1" ry="2.5" fill="#b8d432"/><ellipse cx="5.4" cy="2.5" rx="3.6" ry="1.5" fill="#c4dc45"/><text x="1.5" y="10.4" font-size="4.6" font-weight="bold" fill="#fff" textLength="7.8" lengthAdjust="spacingAndGlyphs">SQL</text></svg>
<div class="bar" style="left:225.8px;top:408.2px;width:52px;height:7.6px"></div>
<span class="t" style="left:394.87px;top:406.00px;font-size:11px;color:#3a3a3a;transform:scaleX(0.9213);">LOG IO</span>
<span class="t" style="left:457.94px;top:406.00px;font-size:11px;color:#3a3a3a;transform:scaleX(0.9634);">88.98</span>
<svg class="abs" style="left:201.7px;top:430.9px" width="11" height="14.5" viewBox="0 0 11 14.5" font-family="Liberation Sans, sans-serif"><path d="M0.3 2.6 V11.6 C0.3 13.4 3 14.2 5.4 14.2 C7.8 14.2 10.5 13.4 10.5 11.6 V2.6 Z" fill="#1b7fd6"/><ellipse cx="5.4" cy="2.7" rx="5.1" ry="2.5" fill="#b8d432"/><ellipse cx="5.4" cy="2.5" rx="3.6" ry="1.5" fill="#c4dc45"/><text x="1.5" y="10.4" font-size="4.6" font-weight="bold" fill="#fff" textLength="7.8" lengthAdjust="spacingAndGlyphs">SQL</text></svg>
<div class="bar" style="left:225.8px;top:436.2px;width:52px;height:7.6px"></div>
<span class="t" style="left:395.21px;top:434.00px;font-size:11px;color:#3a3a3a;transform:scaleX(0.8754);">CPU</span>
<span class="t" style="left:457.94px;top:434.00px;font-size:11px;color:#3a3a3a;transform:scaleX(0.9617);">83.90</span>
<svg class="abs" style="left:201.7px;top:458.9px" width="11" height="14.5" viewBox="0 0 11 14.5" font-family="Liberation Sans, sans-serif"><path d="M0.3 2.6 V11.6 C0.3 13.4 3 14.2 5.4 14.2 C7.8 14.2 10.5 13.4 10.5 11.6 V2.6 Z" fill="#1b7fd6"/><ellipse cx="5.4" cy="2.7" rx="5.1" ry="2.5" fill="#b8d432"/><ellipse cx="5.4" cy="2.5" rx="3.6" ry="1.5" fill="#c4dc45"/><text x="1.5" y="10.4" font-size="4.6" font-weight="bold" fill="#fff" textLength="7.8" lengthAdjust="spacingAndGlyphs">SQL</text></svg>
<div class="bar" style="left:225.8px;top:464.2px;width:52px;height:7.6px"></div>
<span class="t" style="left:395.21px;top:462.00px;font-size:11px;color:#3a3a3a;transform:scaleX(0.8754);">CPU</span>
<span class="t" style="left:457.94px;top:462.00px;font-size:11px;color:#3a3a3a;transform:scaleX(0.9629);">83.55</span>
<svg class="abs" style="left:201.7px;top:486.9px" width="11" height="14.5" viewBox="0 0 11 14.5" font-family="Liberation Sans, sans-serif"><path d="M0.3 2.6 V11.6 C0.3 13.4 3 14.2 5.4 14.2 C7.8 14.2 10.5 13.4 10.5 11.6 V2.6 Z" fill="#1b7fd6"/><ellipse cx="5.4" cy="2.7" rx="5.1" ry="2.5" fill="#b8d432"/><ellipse cx="5.4" cy="2.5" rx="3.6" ry="1.5" fill="#c4dc45"/><text x="1.5" y="10.4" font-size="4.6" font-weight="bold" fill="#fff" textLength="7.8" lengthAdjust="spacingAndGlyphs">SQL</text></svg>
<div class="bar" style="left:225.8px;top:492.2px;width:52px;height:7.6px"></div>
<span class="t" style="left:394.87px;top:490.00px;font-size:11px;color:#3a3a3a;transform:scaleX(0.9213);">LOG IO</span>
<span class="t" style="left:457.85px;top:490.00px;font-size:11px;color:#3a3a3a;transform:scaleX(0.9666);">78.88</span>
<svg class="abs" style="left:201.7px;top:514.9px" width="11" height="14.5" viewBox="0 0 11 14.5" font-family="Liberation Sans, sans-serif"><path d="M0.3 2.6 V11.6 C0.3 13.4 3 14.2 5.4 14.2 C7.8 14.2 10.5 13.4 10.5 11.6 V2.6 Z" fill="#1b7fd6"/><ellipse cx="5.4" cy="2.7" rx="5.1" ry="2.5" fill="#b8d432"/><ellipse cx="5.4" cy="2.5" rx="3.6" ry="1.5" fill="#c4dc45"/><text x="1.5" y="10.4" font-size="4.6" font-weight="bold" fill="#fff" textLength="7.8" lengthAdjust="spacingAndGlyphs">SQL</text></svg>
<div class="bar" style="left:225.8px;top:520.2px;width:52px;height:7.6px"></div>
<span class="t" style="left:394.87px;top:518.00px;font-size:11px;color:#3a3a3a;transform:scaleX(0.9213);">LOG IO</span>
<span class="t" style="left:457.85px;top:518.00px;font-size:11px;color:#3a3a3a;transform:scaleX(0.9693);">76.62</span>
<svg class="abs" style="left:201.7px;top:542.9px" width="11" height="14.5" viewBox="0 0 11 14.5" font-family="Liberation Sans, sans-serif"><path d="M0.3 2.6 V11.6 C0.3 13.4 3 14.2 5.4 14.2 C7.8 14.2 10.5 13.4 10.5 11.6 V2.6 Z" fill="#1b7fd6"/><ellipse cx="5.4" cy="2.7" rx="5.1" ry="2.5" fill="#b8d432"/><ellipse cx="5.4" cy="2.5" rx="3.6" ry="1.5" fill="#c4dc45"/><text x="1.5" y="10.4" font-size="4.6" font-weight="bold" fill="#fff" textLength="7.8" lengthAdjust="spacingAndGlyphs">SQL</text></svg>
<div class="bar" style="left:225.8px;top:548.2px;width:52px;height:7.6px"></div>
<span class="t" style="left:394.90px;top:546.00px;font-size:11px;color:#3a3a3a;transform:scaleX(0.8856);">PHYSICA...</span>
<span class="t" style="left:457.85px;top:546.00px;font-size:11px;color:#3a3a3a;transform:scaleX(0.9687);">74.41</span>
<svg class="abs" style="left:201.7px;top:570.9px" width="11" height="14.5" viewBox="0 0 11 14.5" font-family="Liberation Sans, sans-serif"><path d="M0.3 2.6 V11.6 C0.3 13.4 3 14.2 5.4 14.2 C7.8 14.2 10.5 13.4 10.5 11.6 V2.6 Z" fill="#1b7fd6"/><ellipse cx="5.4" cy="2.7" rx="5.1" ry="2.5" fill="#b8d432"/><ellipse cx="5.4" cy="2.5" rx="3.6" ry="1.5" fill="#c4dc45"/><text x="1.5" y="10.4" font-size="4.6" font-weight="bold" fill="#fff" textLength="7.8" lengthAdjust="spacingAndGlyphs">SQL</text></svg>
<div class="bar" style="left:225.8px;top:576.2px;width:52px;height:7.6px"></div>
<span class="t" style="left:395.21px;top:574.00px;font-size:11px;color:#3a3a3a;transform:scaleX(0.8754);">CPU</span>
<span class="t" style="left:457.86px;top:574.00px;font-size:11px;color:#3a3a3a;transform:scaleX(0.9607);">69.84</span>
<span class="t" style="left:336.36px;top:600.00px;font-size:11px;color:#444;transform:scaleX(1.0040);">1 of 10</span><svg class="abs" style="left:0;top:0" width="1" height="1"><path d="M322.40 601.10 L317.60 605.20 L322.40 609.30" fill="none" stroke="#808080" stroke-width="1.5"/></svg><svg class="abs" style="left:0;top:0" width="1" height="1"><path d="M384.50 601.10 L389.30 605.20 L384.50 609.30" fill="none" stroke="#3d84c6" stroke-width="1.5"/></svg>
<div class="panel" style="left:534px;top:291px;width:650px;height:325px;"><div class="row" style="top:21px;width:650px"></div><div class="row" style="top:49px;width:650px"></div><div class="row" style="top:77px;width:650px"></div><div class="row" style="top:105px;width:650px"></div><div class="row" style="top:133px;width:650px"></div><div class="row" style="top:161px;width:650px"></div><div class="row" style="top:189px;width:650px"></div><div class="row" style="top:217px;width:650px"></div><div class="row" style="top:245px;width:650px"></div><div class="row" style="top:273px;width:650px"></div><div class="pager" style="top:301px;width:650px;height:23px"></div></div>
<svg class="abs" style="left:0;top:0" width="1" height="1"><path d="M541.80 297.60 L552.10 297.60 L552.10 298.10 L547.93 302.80 L547.93 307.60 L545.97 307.60 L545.97 302.80 L541.80 298.10 Z" fill="#575757"/></svg>
<span class="t" style="left:565.44px;top:297.00px;font-size:10px;color:#757575;transform:scaleX(0.7668);">QUERY</span>
<span class="t" style="left:668.37px;top:297.00px;font-size:10px;color:#757575;transform:scaleX(0.7649);">METRIC</span>
<span class="t" style="left:772.22px;top:297.00px;font-size:10px;color:#757575;transform:scaleX(0.8283);">MAX (S)</span>
<span class="t" style="left:836.08px;top:297.00px;font-size:10px;color:#757575;transform:scaleX(0.7700);">AVG (S)</span>
<span class="t" style="left:898.41px;top:297.00px;font-size:10px;color:#757575;transform:scaleX(0.8427);">DOMINANT WAIT</span>
<span class="t" style="left:1002.12px;top:297.00px;font-size:10px;color:#757575;transform:scaleX(0.8283);">MAX (S)</span>
<span class="t" style="left:1065.68px;top:297.00px;font-size:10px;color:#757575;transform:scaleX(0.7700);">AVG (S)</span>
<span class="t" style="left:1128.30px;top:297.00px;font-size:10px;color:#757575;transform:scaleX(0.7295);">EXECS</span>
<svg class="abs" style="left:542.2px;top:318.8px" width="13" height="14.5" viewBox="0 0 13 14.5"><defs><linearGradient id="qg" x1="0" y1="0" x2="0" y2="1"><stop offset="0" stop-color="#5a7fd2"/><stop offset="1" stop-color="#9db6ea"/></linearGradient></defs><rect x="0.2" y="0.2" width="10.8" height="10.6" fill="url(#qg)"/><rect x="0.9" y="3.2" width="0.8" height="0.8" fill="#fff"/><rect x="0.9" y="5.6" width="0.8" height="0.8" fill="#fff"/><rect x="0.9" y="8" width="0.8" height="0.8" fill="#fff"/><path d="M4.3 10.3 L1.4 13.4" stroke="#c9ccd2" stroke-width="1.3" stroke-linecap="round"/><circle cx="7.5" cy="7.1" r="4.4" fill="#c6ecf8" stroke="#d9dde3" stroke-width="0.9"/></svg>
<span class="t" style="left:565.39px;top:322.00px;font-size:11px;color:#3a3a3a;transform:scaleX(0.9508);">0x8888858B1D13...</span>
<span class="t" style="left:668.59px;top:322.00px;font-size:11px;color:#3a3a3a;transform:scaleX(1.0135);">Duration</span>
<span class="t" style="left:772.37px;top:322.00px;font-size:11px;color:#3a3a3a;transform:scaleX(0.9610);">22913</span>
<span class="t" style="left:835.70px;top:322.00px;font-size:11px;color:#3a3a3a;transform:scaleX(0.9532);">3314</span>
<span class="t" style="left:898.33px;top:322.00px;font-size:11px;color:#3a3a3a;transform:scaleX(0.8548);">BUFFERLATCH</span>
<span class="t" style="left:1001.99px;top:322.00px;font-size:11px;color:#3a3a3a;transform:scaleX(0.9686);">17760</span>
<span class="t" style="left:1065.17px;top:322.00px;font-size:11px;color:#3a3a3a;transform:scaleX(0.9650);">2628</span>
<span class="t" style="left:1128.47px;top:322.00px;font-size:11px;color:#3a3a3a;transform:scaleX(0.9777);">56</span>
<svg class="abs" style="left:542.2px;top:346.8px" width="13" height="14.5" viewBox="0 0 13 14.5"><defs><linearGradient id="qg" x1="0" y1="0" x2="0" y2="1"><stop offset="0" stop-color="#5a7fd2"/><stop offset="1" stop-color="#9db6ea"/></linearGradient></defs><rect x="0.2" y="0.2" width="10.8" height="10.6" fill="url(#qg)"/><rect x="0.9" y="3.2" width="0.8" height="0.8" fill="#fff"/><rect x="0.9" y="5.6" width="0.8" height="0.8" fill="#fff"/><rect x="0.9" y="8" width="0.8" height="0.8" fill="#fff"/><path d="M4.3 10.3 L1.4 13.4" stroke="#c9ccd2" stroke-width="1.3" stroke-linecap="round"/><circle cx="7.5" cy="7.1" r="4.4" fill="#c6ecf8" stroke="#d9dde3" stroke-width="0.9"/></svg>
<span class="t" style="left:565.40px;top:350.00px;font-size:11px;color:#3a3a3a;transform:scaleX(0.9272);">0xB169953CA7A9...</span>
<span class="t" style="left:668.59px;top:350.00px;font-size:11px;color:#3a3a3a;transform:scaleX(1.0135);">Duration</span>
<span class="t" style="left:772.09px;top:350.00px;font-size:11px;color:#3a3a3a;transform:scaleX(0.9703);">17976</span>
<span class="t" style="left:835.57px;top:350.00px;font-size:11px;color:#3a3a3a;transform:scaleX(0.9643);">2225</span>
<span class="t" style="left:898.33px;top:350.00px;font-size:11px;color:#3a3a3a;transform:scaleX(0.8548);">BUFFERLATCH</span>
<span class="t" style="left:1001.99px;top:350.00px;font-size:11px;color:#3a3a3a;transform:scaleX(0.9702);">14828</span>
<span class="t" style="left:1064.88px;top:350.00px;font-size:11px;color:#3a3a3a;transform:scaleX(0.9801);">1867</span>
<span class="t" style="left:1128.07px;top:350.00px;font-size:11px;color:#3a3a3a;transform:scaleX(0.9918);">101</span>
<svg class="abs" style="left:542.2px;top:374.8px" width="13" height="14.5" viewBox="0 0 13 14.5"><defs><linearGradient id="qg" x1="0" y1="0" x2="0" y2="1"><stop offset="0" stop-color="#5a7fd2"/><stop offset="1" stop-color="#9db6ea"/></linearGradient></defs><rect x="0.2" y="0.2" width="10.8" height="10.6" fill="url(#qg)"/><rect x="0.9" y="3.2" width="0.8" height="0.8" fill="#fff"/><rect x="0.9" y="5.6" width="0.8" height="0.8" fill="#fff"/><rect x="0.9" y="8" width="0.8" height="0.8" fill="#fff"/><path d="M4.3 10.3 L1.4 13.4" stroke="#c9ccd2" stroke-width="1.3" stroke-linecap="round"/><circle cx="7.5" cy="7.1" r="4.4" fill="#c6ecf8" stroke="#d9dde3" stroke-width="0.9"/></svg>
<span class="t" style="left:565.40px;top:378.00px;font-size:11px;color:#3a3a3a;transform:scaleX(0.9216);">0x54503DFDC624...</span>
<span class="t" style="left:668.59px;top:378.00px;font-size:11px;color:#3a3a3a;transform:scaleX(1.0135);">Duration</span>
<span class="t" style="left:772.37px;top:378.00px;font-size:11px;color:#3a3a3a;transform:scaleX(0.9650);">2688</span>
<span class="t" style="left:835.56px;top:378.00px;font-size:11px;color:#3a3a3a;transform:scaleX(0.9728);">696</span>
<span class="t" style="left:898.30px;top:378.00px;font-size:11px;color:#3a3a3a;transform:scaleX(0.8818);">PARALLELISM</span>
<span class="t" style="left:1001.99px;top:378.00px;font-size:11px;color:#3a3a3a;transform:scaleX(0.9696);">15055</span>
<span class="t" style="left:1065.17px;top:378.00px;font-size:11px;color:#3a3a3a;transform:scaleX(0.9630);">2870</span>
<span class="t" style="left:1128.05px;top:378.00px;font-size:11px;color:#3a3a3a;transform:scaleX(1.0199);">17</span>
<svg class="abs" style="left:542.2px;top:402.8px" width="13" height="14.5" viewBox="0 0 13 14.5"><defs><linearGradient id="qg" x1="0" y1="0" x2="0" y2="1"><stop offset="0" stop-color="#5a7fd2"/><stop offset="1" stop-color="#9db6ea"/></linearGradient></defs><rect x="0.2" y="0.2" width="10.8" height="10.6" fill="url(#qg)"/><rect x="0.9" y="3.2" width="0.8" height="0.8" fill="#fff"/><rect x="0.9" y="5.6" width="0.8" height="0.8" fill="#fff"/><rect x="0.9" y="8" width="0.8" height="0.8" fill="#fff"/><path d="M4.3 10.3 L1.4 13.4" stroke="#c9ccd2" stroke-width="1.3" stroke-linecap="round"/><circle cx="7.5" cy="7.1" r="4.4" fill="#c6ecf8" stroke="#d9dde3" stroke-width="0.9"/></svg>
<span class="t" style="left:565.41px;top:406.00px;font-size:11px;color:#3a3a3a;transform:scaleX(0.9104);">0xD3707324DC1C...</span>
<span class="t" style="left:668.59px;top:406.00px;font-size:11px;color:#3a3a3a;transform:scaleX(1.0135);">Duration</span>
<span class="t" style="left:772.37px;top:406.00px;font-size:11px;color:#3a3a3a;transform:scaleX(0.9586);">2454</span>
<span class="t" style="left:835.57px;top:406.00px;font-size:11px;color:#3a3a3a;transform:scaleX(0.9483);">65.08</span>
<span class="t" style="left:898.61px;top:406.00px;font-size:11px;color:#3a3a3a;transform:scaleX(0.8754);">CPU</span>
<span class="t" style="left:1002.40px;top:406.00px;font-size:11px;color:#3a3a3a;transform:scaleX(0.9650);">326</span>
<span class="t" style="left:1065.29px;top:406.00px;font-size:11px;color:#3a3a3a;transform:scaleX(0.9385);">55.44</span>
<span class="t" style="left:1128.44px;top:406.00px;font-size:11px;color:#3a3a3a;transform:scaleX(0.9608);">88197</span>
<svg class="abs" style="left:542.2px;top:430.8px" width="13" height="14.5" viewBox="0 0 13 14.5"><defs><linearGradient id="qg" x1="0" y1="0" x2="0" y2="1"><stop offset="0" stop-color="#5a7fd2"/><stop offset="1" stop-color="#9db6ea"/></linearGradient></defs><rect x="0.2" y="0.2" width="10.8" height="10.6" fill="url(#qg)"/><rect x="0.9" y="3.2" width="0.8" height="0.8" fill="#fff"/><rect x="0.9" y="5.6" width="0.8" height="0.8" fill="#fff"/><rect x="0.9" y="8" width="0.8" height="0.8" fill="#fff"/><path d="M4.3 10.3 L1.4 13.4" stroke="#c9ccd2" stroke-width="1.3" stroke-linecap="round"/><circle cx="7.5" cy="7.1" r="4.4" fill="#c6ecf8" stroke="#d9dde3" stroke-width="0.9"/></svg>
<span class="t" style="left:565.42px;top:434.00px;font-size:11px;color:#3a3a3a;transform:scaleX(0.8783);">0x5BAFCEE1DD35...</span>
<span class="t" style="left:668.59px;top:434.00px;font-size:11px;color:#3a3a3a;transform:scaleX(1.0135);">Duration</span>
<span class="t" style="left:772.08px;top:434.00px;font-size:11px;color:#3a3a3a;transform:scaleX(0.9769);">1548</span>
<span class="t" style="left:835.71px;top:434.00px;font-size:11px;color:#3a3a3a;transform:scaleX(0.9427);">35.55</span>
<span class="t" style="left:898.61px;top:434.00px;font-size:11px;color:#3a3a3a;transform:scaleX(0.8754);">CPU</span>
<span class="t" style="left:1002.39px;top:434.00px;font-size:11px;color:#3a3a3a;transform:scaleX(0.9679);">341</span>
<span class="t" style="left:1065.30px;top:434.00px;font-size:11px;color:#3a3a3a;transform:scaleX(0.9435);">33.23</span>
<span class="t" style="left:1128.12px;top:434.00px;font-size:11px;color:#3a3a3a;transform:scaleX(0.9357);">199K</span>
<svg class="abs" style="left:542.2px;top:458.8px" width="13" height="14.5" viewBox="0 0 13 14.5"><defs><linearGradient id="qg" x1="0" y1="0" x2="0" y2="1"><stop offset="0" stop-color="#5a7fd2"/><stop offset="1" stop-color="#9db6ea"/></linearGradient></defs><rect x="0.2" y="0.2" width="10.8" height="10.6" fill="url(#qg)"/><rect x="0.9" y="3.2" width="0.8" height="0.8" fill="#fff"/><rect x="0.9" y="5.6" width="0.8" height="0.8" fill="#fff"/><rect x="0.9" y="8" width="0.8" height="0.8" fill="#fff"/><path d="M4.3 10.3 L1.4 13.4" stroke="#c9ccd2" stroke-width="1.3" stroke-linecap="round"/><circle cx="7.5" cy="7.1" r="4.4" fill="#c6ecf8" stroke="#d9dde3" stroke-width="0.9"/></svg>
<span class="t" style="left:565.40px;top:462.00px;font-size:11px;color:#3a3a3a;transform:scaleX(0.9389);">0xAB0554561D25...</span>
<span class="t" style="left:668.59px;top:462.00px;font-size:11px;color:#3a3a3a;transform:scaleX(1.0135);">Duration</span>
<span class="t" style="left:772.08px;top:462.00px;font-size:11px;color:#3a3a3a;transform:scaleX(0.9771);">1413</span>
<span class="t" style="left:835.70px;top:462.00px;font-size:11px;color:#3a3a3a;transform:scaleX(0.9650);">373</span>
<span class="t" style="left:898.30px;top:462.00px;font-size:11px;color:#3a3a3a;transform:scaleX(0.8818);">PARALLELISM</span>
<span class="t" style="left:1002.26px;top:462.00px;font-size:11px;color:#3a3a3a;transform:scaleX(0.9635);">7000</span>
<span class="t" style="left:1065.24px;top:462.00px;font-size:11px;color:#3a3a3a;transform:scaleX(0.9722);">892</span>
<span class="t" style="left:1128.05px;top:462.00px;font-size:11px;color:#3a3a3a;transform:scaleX(1.0199);">17</span>
<svg class="abs" style="left:542.2px;top:486.8px" width="13" height="14.5" viewBox="0 0 13 14.5"><defs><linearGradient id="qg" x1="0" y1="0" x2="0" y2="1"><stop offset="0" stop-color="#5a7fd2"/><stop offset="1" stop-color="#9db6ea"/></linearGradient></defs><rect x="0.2" y="0.2" width="10.8" height="10.6" fill="url(#qg)"/><rect x="0.9" y="3.2" width="0.8" height="0.8" fill="#fff"/><rect x="0.9" y="5.6" width="0.8" height="0.8" fill="#fff"/><rect x="0.9" y="8" width="0.8" height="0.8" fill="#fff"/><path d="M4.3 10.3 L1.4 13.4" stroke="#c9ccd2" stroke-width="1.3" stroke-linecap="round"/><circle cx="7.5" cy="7.1" r="4.4" fill="#c6ecf8" stroke="#d9dde3" stroke-width="0.9"/></svg>
<span class="t" style="left:565.41px;top:490.00px;font-size:11px;color:#3a3a3a;transform:scaleX(0.9160);">0x92BFBFD21E15...</span>
<span class="t" style="left:668.59px;top:490.00px;font-size:11px;color:#3a3a3a;transform:scaleX(1.0135);">Duration</span>
<span class="t" style="left:772.47px;top:490.00px;font-size:11px;color:#3a3a3a;transform:scaleX(0.9682);">579</span>
<span class="t" style="left:835.56px;top:490.00px;font-size:11px;color:#3a3a3a;transform:scaleX(0.9764);">207</span>
<span class="t" style="left:898.61px;top:490.00px;font-size:11px;color:#3a3a3a;transform:scaleX(0.8754);">CPU</span>
<span class="t" style="left:1002.40px;top:490.00px;font-size:11px;color:#3a3a3a;transform:scaleX(0.9620);">380</span>
<span class="t" style="left:1064.87px;top:490.00px;font-size:11px;color:#3a3a3a;transform:scaleX(0.9884);">128</span>
<span class="t" style="left:1128.05px;top:490.00px;font-size:11px;color:#3a3a3a;transform:scaleX(1.0199);">17</span>
<svg class="abs" style="left:542.2px;top:514.8px" width="13" height="14.5" viewBox="0 0 13 14.5"><defs><linearGradient id="qg" x1="0" y1="0" x2="0" y2="1"><stop offset="0" stop-color="#5a7fd2"/><stop offset="1" stop-color="#9db6ea"/></linearGradient></defs><rect x="0.2" y="0.2" width="10.8" height="10.6" fill="url(#qg)"/><rect x="0.9" y="3.2" width="0.8" height="0.8" fill="#fff"/><rect x="0.9" y="5.6" width="0.8" height="0.8" fill="#fff"/><rect x="0.9" y="8" width="0.8" height="0.8" fill="#fff"/><path d="M4.3 10.3 L1.4 13.4" stroke="#c9ccd2" stroke-width="1.3" stroke-linecap="round"/><circle cx="7.5" cy="7.1" r="4.4" fill="#c6ecf8" stroke="#d9dde3" stroke-width="0.9"/></svg>
<span class="t" style="left:565.41px;top:518.00px;font-size:11px;color:#3a3a3a;transform:scaleX(0.9048);">0xCC6260CE16A2...</span>
<span class="t" style="left:668.59px;top:518.00px;font-size:11px;color:#3a3a3a;transform:scaleX(1.0135);">Duration</span>
<span class="t" style="left:772.50px;top:518.00px;font-size:11px;color:#3a3a3a;transform:scaleX(0.9638);">375</span>
<span class="t" style="left:835.27px;top:518.00px;font-size:11px;color:#3a3a3a;transform:scaleX(0.9909);">139</span>
<span class="t" style="left:898.61px;top:518.00px;font-size:11px;color:#3a3a3a;transform:scaleX(0.8754);">CPU</span>
<span class="t" style="left:1002.26px;top:518.00px;font-size:11px;color:#3a3a3a;transform:scaleX(0.9694);">260</span>
<span class="t" style="left:1064.83px;top:518.00px;font-size:11px;color:#3a3a3a;transform:scaleX(1.0351);">110</span>
<span class="t" style="left:1128.36px;top:518.00px;font-size:11px;color:#3a3a3a;transform:scaleX(0.9829);">20</span>
<svg class="abs" style="left:542.2px;top:542.8px" width="13" height="14.5" viewBox="0 0 13 14.5"><defs><linearGradient id="qg" x1="0" y1="0" x2="0" y2="1"><stop offset="0" stop-color="#5a7fd2"/><stop offset="1" stop-color="#9db6ea"/></linearGradient></defs><rect x="0.2" y="0.2" width="10.8" height="10.6" fill="url(#qg)"/><rect x="0.9" y="3.2" width="0.8" height="0.8" fill="#fff"/><rect x="0.9" y="5.6" width="0.8" height="0.8" fill="#fff"/><rect x="0.9" y="8" width="0.8" height="0.8" fill="#fff"/><path d="M4.3 10.3 L1.4 13.4" stroke="#c9ccd2" stroke-width="1.3" stroke-linecap="round"/><circle cx="7.5" cy="7.1" r="4.4" fill="#c6ecf8" stroke="#d9dde3" stroke-width="0.9"/></svg>
<span class="t" style="left:565.42px;top:546.00px;font-size:11px;color:#3a3a3a;transform:scaleX(0.8743);">0xF24AEEDF83EA8E</span>
<span class="t" style="left:668.59px;top:546.00px;font-size:11px;color:#3a3a3a;transform:scaleX(1.0135);">Duration</span>
<span class="t" style="left:772.50px;top:546.00px;font-size:11px;color:#3a3a3a;transform:scaleX(0.9638);">315</span>
<span class="t" style="left:835.56px;top:546.00px;font-size:11px;color:#3a3a3a;transform:scaleX(0.9725);">246</span>
<span class="t" style="left:898.88px;top:546.00px;font-size:11px;color:#3a3a3a;transform:scaleX(0.9014);">TRANLOGIO</span>
<span class="t" style="left:1002.26px;top:546.00px;font-size:11px;color:#3a3a3a;transform:scaleX(0.9697);">680</span>
<span class="t" style="left:1065.28px;top:546.00px;font-size:11px;color:#3a3a3a;transform:scaleX(0.9632);">580</span>
<span class="t" style="left:1128.30px;top:546.00px;font-size:11px;color:#3a3a3a;transform:scaleX(1.0559);">7</span>
<svg class="abs" style="left:542.2px;top:570.8px" width="13" height="14.5" viewBox="0 0 13 14.5"><defs><linearGradient id="qg" x1="0" y1="0" x2="0" y2="1"><stop offset="0" stop-color="#5a7fd2"/><stop offset="1" stop-color="#9db6ea"/></linearGradient></defs><rect x="0.2" y="0.2" width="10.8" height="10.6" fill="url(#qg)"/><rect x="0.9" y="3.2" width="0.8" height="0.8" fill="#fff"/><rect x="0.9" y="5.6" width="0.8" height="0.8" fill="#fff"/><rect x="0.9" y="8" width="0.8" height="0.8" fill="#fff"/><path d="M4.3 10.3 L1.4 13.4" stroke="#c9ccd2" stroke-width="1.3" stroke-linecap="round"/><circle cx="7.5" cy="7.1" r="4.4" fill="#c6ecf8" stroke="#d9dde3" stroke-width="0.9"/></svg>
<span class="t" style="left:565.42px;top:574.00px;font-size:11px;color:#3a3a3a;transform:scaleX(0.8895);">0x2BBE6E4C80F3A8</span>
<span class="t" style="left:668.59px;top:574.00px;font-size:11px;color:#3a3a3a;transform:scaleX(1.0135);">Duration</span>
<span class="t" style="left:772.36px;top:574.00px;font-size:11px;color:#3a3a3a;transform:scaleX(0.9712);">255</span>
<span class="t" style="left:835.28px;top:574.00px;font-size:11px;color:#3a3a3a;transform:scaleX(0.9794);">194</span>
<span class="t" style="left:898.88px;top:574.00px;font-size:11px;color:#3a3a3a;transform:scaleX(0.9014);">TRANLOGIO</span>
<span class="t" style="left:1002.34px;top:574.00px;font-size:11px;color:#3a3a3a;transform:scaleX(0.9682);">813</span>
<span class="t" style="left:1065.27px;top:574.00px;font-size:11px;color:#3a3a3a;transform:scaleX(0.9700);">597</span>
<span class="t" style="left:1128.32px;top:574.00px;font-size:11px;color:#3a3a3a;transform:scaleX(1.0402);">6</span>
<span class="t" style="left:844.44px;top:600.00px;font-size:11px;color:#444;transform:scaleX(1.0242);">1 of 4</span><svg class="abs" style="left:0;top:0" width="1" height="1"><path d="M830.70 601.10 L825.90 605.20 L830.70 609.30" fill="none" stroke="#808080" stroke-width="1.5"/></svg><svg class="abs" style="left:0;top:0" width="1" height="1"><path d="M887.00 601.10 L891.80 605.20 L887.00 609.30" fill="none" stroke="#3d84c6" stroke-width="1.5"/></svg>
<div class="panel" style="left:1204.5px;top:291px;width:319.5px;height:325px;"><div class="row" style="top:21px;width:319.5px"></div><div class="row" style="top:49px;width:319.5px"></div><div class="row" style="top:77px;width:319.5px"></div><div class="row" style="top:105px;width:319.5px"></div><div class="row" style="top:133px;width:319.5px"></div><div class="row" style="top:161px;width:319.5px"></div><div class="row" style="top:189px;width:319.5px"></div><div class="row" style="top:217px;width:319.5px"></div><div class="row" style="top:245px;width:319.5px"></div><div class="row" style="top:273px;width:319.5px"></div><div class="pager" style="top:301px;width:319.5px;height:23px"></div></div>
<svg class="abs" style="left:0;top:0" width="1" height="1"><path d="M1213.00 296.90 L1223.30 296.90 L1223.30 297.40 L1219.13 302.10 L1219.13 306.90 L1217.17 306.90 L1217.17 302.10 L1213.00 297.40 Z" fill="#575757"/></svg>
<span class="t" style="left:1236.87px;top:297.00px;font-size:10px;color:#757575;transform:scaleX(0.7687);">WAIT TYPE</span>
<span class="t" style="left:1469.83px;top:297.00px;font-size:10px;color:#757575;transform:scaleX(0.7576);">TOTAL (S)</span>
<svg class="abs" style="left:1212px;top:318.7px" width="15" height="14.5" viewBox="0 0 15 14.5"><path d="M0.2 2.4 V9.8 C0.2 11.2 2.6 12 5 12 C7.4 12 9.8 11.2 9.8 9.8 V2.4 Z" fill="#12b4ee"/><path d="M5.4 2.4 V12 C7.6 11.9 9.8 11.1 9.8 9.8 V2.4 Z" fill="#5fd0f5"/><ellipse cx="5" cy="2.4" rx="4.8" ry="2.2" fill="#b8d432"/><ellipse cx="5" cy="2.3" rx="3.3" ry="1.3" fill="#c6de48"/><rect x="7.3" y="3.1" width="7.4" height="11.4" fill="#fff"/><path d="M7.9 3.7 H14.1 V6.9 L12.4 8.9 L14.1 10.9 V14.1 H7.9 V10.9 L9.6 8.9 L7.9 6.9 Z" fill="#a66bb6"/><path d="M9.2 13.0 C9.4 11.9 10.3 11.3 11.0 11.1 C11.7 11.3 12.6 11.9 12.8 13.0 L12.0 13.0 C11.8 12.4 11.4 12.1 11.0 12.0 C10.6 12.1 10.2 12.4 10.0 13.0 Z" fill="#fff" opacity=".85"/><rect x="9.0" y="4.4" width="4.0" height="0.9" fill="#fff" opacity=".75"/></svg>
<span class="t" style="left:1236.48px;top:322.00px;font-size:11px;color:#3a3a3a;transform:scaleX(0.8383);">SOS_SCHEDULER_YIELD</span>
<span class="t" style="left:1469.21px;top:322.00px;font-size:11px;color:#3a3a3a;transform:scaleX(0.9387);">10046K</span>
<svg class="abs" style="left:1212px;top:346.7px" width="15" height="14.5" viewBox="0 0 15 14.5"><path d="M0.2 2.4 V9.8 C0.2 11.2 2.6 12 5 12 C7.4 12 9.8 11.2 9.8 9.8 V2.4 Z" fill="#12b4ee"/><path d="M5.4 2.4 V12 C7.6 11.9 9.8 11.1 9.8 9.8 V2.4 Z" fill="#5fd0f5"/><ellipse cx="5" cy="2.4" rx="4.8" ry="2.2" fill="#b8d432"/><ellipse cx="5" cy="2.3" rx="3.3" ry="1.3" fill="#c6de48"/><rect x="7.3" y="3.1" width="7.4" height="11.4" fill="#fff"/><path d="M7.9 3.7 H14.1 V6.9 L12.4 8.9 L14.1 10.9 V14.1 H7.9 V10.9 L9.6 8.9 L7.9 6.9 Z" fill="#a66bb6"/><path d="M9.2 13.0 C9.4 11.9 10.3 11.3 11.0 11.1 C11.7 11.3 12.6 11.9 12.8 13.0 L12.0 13.0 C11.8 12.4 11.4 12.1 11.0 12.0 C10.6 12.1 10.2 12.4 10.0 13.0 Z" fill="#fff" opacity=".85"/><rect x="9.0" y="4.4" width="4.0" height="0.9" fill="#fff" opacity=".75"/></svg>
<span class="t" style="left:1236.11px;top:350.00px;font-size:11px;color:#3a3a3a;transform:scaleX(0.8762);">PAGEIOLATCH_SH</span>
<span class="t" style="left:1469.49px;top:350.00px;font-size:11px;color:#3a3a3a;transform:scaleX(0.9289);">2838K</span>
<svg class="abs" style="left:1212px;top:374.7px" width="15" height="14.5" viewBox="0 0 15 14.5"><path d="M0.2 2.4 V9.8 C0.2 11.2 2.6 12 5 12 C7.4 12 9.8 11.2 9.8 9.8 V2.4 Z" fill="#12b4ee"/><path d="M5.4 2.4 V12 C7.6 11.9 9.8 11.1 9.8 9.8 V2.4 Z" fill="#5fd0f5"/><ellipse cx="5" cy="2.4" rx="4.8" ry="2.2" fill="#b8d432"/><ellipse cx="5" cy="2.3" rx="3.3" ry="1.3" fill="#c6de48"/><rect x="7.3" y="3.1" width="7.4" height="11.4" fill="#fff"/><path d="M7.9 3.7 H14.1 V6.9 L12.4 8.9 L14.1 10.9 V14.1 H7.9 V10.9 L9.6 8.9 L7.9 6.9 Z" fill="#a66bb6"/><path d="M9.2 13.0 C9.4 11.9 10.3 11.3 11.0 11.1 C11.7 11.3 12.6 11.9 12.8 13.0 L12.0 13.0 C11.8 12.4 11.4 12.1 11.0 12.0 C10.6 12.1 10.2 12.4 10.0 13.0 Z" fill="#fff" opacity=".85"/><rect x="9.0" y="4.4" width="4.0" height="0.9" fill="#fff" opacity=".75"/></svg>
<span class="t" style="left:1236.12px;top:378.00px;font-size:11px;color:#3a3a3a;transform:scaleX(0.8665);">PAGELATCH_SH</span>
<span class="t" style="left:1469.61px;top:378.00px;font-size:11px;color:#3a3a3a;transform:scaleX(0.9201);">317K</span>
<svg class="abs" style="left:1212px;top:402.7px" width="15" height="14.5" viewBox="0 0 15 14.5"><path d="M0.2 2.4 V9.8 C0.2 11.2 2.6 12 5 12 C7.4 12 9.8 11.2 9.8 9.8 V2.4 Z" fill="#12b4ee"/><path d="M5.4 2.4 V12 C7.6 11.9 9.8 11.1 9.8 9.8 V2.4 Z" fill="#5fd0f5"/><ellipse cx="5" cy="2.4" rx="4.8" ry="2.2" fill="#b8d432"/><ellipse cx="5" cy="2.3" rx="3.3" ry="1.3" fill="#c6de48"/><rect x="7.3" y="3.1" width="7.4" height="11.4" fill="#fff"/><path d="M7.9 3.7 H14.1 V6.9 L12.4 8.9 L14.1 10.9 V14.1 H7.9 V10.9 L9.6 8.9 L7.9 6.9 Z" fill="#a66bb6"/><path d="M9.2 13.0 C9.4 11.9 10.3 11.3 11.0 11.1 C11.7 11.3 12.6 11.9 12.8 13.0 L12.0 13.0 C11.8 12.4 11.4 12.1 11.0 12.0 C10.6 12.1 10.2 12.4 10.0 13.0 Z" fill="#fff" opacity=".85"/><rect x="9.0" y="4.4" width="4.0" height="0.9" fill="#fff" opacity=".75"/></svg>
<span class="t" style="left:1236.12px;top:406.00px;font-size:11px;color:#3a3a3a;transform:scaleX(0.8611);">PAGEIOLATCH_EX</span>
<span class="t" style="left:1469.19px;top:406.00px;font-size:11px;color:#3a3a3a;transform:scaleX(0.9727);">15327</span>
<svg class="abs" style="left:1212px;top:430.7px" width="15" height="14.5" viewBox="0 0 15 14.5"><path d="M0.2 2.4 V9.8 C0.2 11.2 2.6 12 5 12 C7.4 12 9.8 11.2 9.8 9.8 V2.4 Z" fill="#12b4ee"/><path d="M5.4 2.4 V12 C7.6 11.9 9.8 11.1 9.8 9.8 V2.4 Z" fill="#5fd0f5"/><ellipse cx="5" cy="2.4" rx="4.8" ry="2.2" fill="#b8d432"/><ellipse cx="5" cy="2.3" rx="3.3" ry="1.3" fill="#c6de48"/><rect x="7.3" y="3.1" width="7.4" height="11.4" fill="#fff"/><path d="M7.9 3.7 H14.1 V6.9 L12.4 8.9 L14.1 10.9 V14.1 H7.9 V10.9 L9.6 8.9 L7.9 6.9 Z" fill="#a66bb6"/><path d="M9.2 13.0 C9.4 11.9 10.3 11.3 11.0 11.1 C11.7 11.3 12.6 11.9 12.8 13.0 L12.0 13.0 C11.8 12.4 11.4 12.1 11.0 12.0 C10.6 12.1 10.2 12.4 10.0 13.0 Z" fill="#fff" opacity=".85"/><rect x="9.0" y="4.4" width="4.0" height="0.9" fill="#fff" opacity=".75"/></svg>
<span class="t" style="left:1236.13px;top:434.00px;font-size:11px;color:#3a3a3a;transform:scaleX(0.8479);">LCK_M_SCH_S</span>
<span class="t" style="left:1469.46px;top:434.00px;font-size:11px;color:#3a3a3a;transform:scaleX(0.9589);">6234</span>
<svg class="abs" style="left:1212px;top:458.7px" width="15" height="14.5" viewBox="0 0 15 14.5"><path d="M0.2 2.4 V9.8 C0.2 11.2 2.6 12 5 12 C7.4 12 9.8 11.2 9.8 9.8 V2.4 Z" fill="#12b4ee"/><path d="M5.4 2.4 V12 C7.6 11.9 9.8 11.1 9.8 9.8 V2.4 Z" fill="#5fd0f5"/><ellipse cx="5" cy="2.4" rx="4.8" ry="2.2" fill="#b8d432"/><ellipse cx="5" cy="2.3" rx="3.3" ry="1.3" fill="#c6de48"/><rect x="7.3" y="3.1" width="7.4" height="11.4" fill="#fff"/><path d="M7.9 3.7 H14.1 V6.9 L12.4 8.9 L14.1 10.9 V14.1 H7.9 V10.9 L9.6 8.9 L7.9 6.9 Z" fill="#a66bb6"/><path d="M9.2 13.0 C9.4 11.9 10.3 11.3 11.0 11.1 C11.7 11.3 12.6 11.9 12.8 13.0 L12.0 13.0 C11.8 12.4 11.4 12.1 11.0 12.0 C10.6 12.1 10.2 12.4 10.0 13.0 Z" fill="#fff" opacity=".85"/><rect x="9.0" y="4.4" width="4.0" height="0.9" fill="#fff" opacity=".75"/></svg>
<span class="t" style="left:1236.12px;top:462.00px;font-size:11px;color:#3a3a3a;transform:scaleX(0.8592);">LOG_RATE_GOVERNOR</span>
<span class="t" style="left:1469.60px;top:462.00px;font-size:11px;color:#3a3a3a;transform:scaleX(0.9626);">3347</span>
<svg class="abs" style="left:1212px;top:486.7px" width="15" height="14.5" viewBox="0 0 15 14.5"><path d="M0.2 2.4 V9.8 C0.2 11.2 2.6 12 5 12 C7.4 12 9.8 11.2 9.8 9.8 V2.4 Z" fill="#12b4ee"/><path d="M5.4 2.4 V12 C7.6 11.9 9.8 11.1 9.8 9.8 V2.4 Z" fill="#5fd0f5"/><ellipse cx="5" cy="2.4" rx="4.8" ry="2.2" fill="#b8d432"/><ellipse cx="5" cy="2.3" rx="3.3" ry="1.3" fill="#c6de48"/><rect x="7.3" y="3.1" width="7.4" height="11.4" fill="#fff"/><path d="M7.9 3.7 H14.1 V6.9 L12.4 8.9 L14.1 10.9 V14.1 H7.9 V10.9 L9.6 8.9 L7.9 6.9 Z" fill="#a66bb6"/><path d="M9.2 13.0 C9.4 11.9 10.3 11.3 11.0 11.1 C11.7 11.3 12.6 11.9 12.8 13.0 L12.0 13.0 C11.8 12.4 11.4 12.1 11.0 12.0 C10.6 12.1 10.2 12.4 10.0 13.0 Z" fill="#fff" opacity=".85"/><rect x="9.0" y="4.4" width="4.0" height="0.9" fill="#fff" opacity=".75"/></svg>
<span class="t" style="left:1236.10px;top:490.00px;font-size:11px;color:#3a3a3a;transform:scaleX(0.8882);">MEMORY_ALLOCATION_EXT</span>
<span class="t" style="left:1469.47px;top:490.00px;font-size:11px;color:#3a3a3a;transform:scaleX(0.9668);">2909</span>
<svg class="abs" style="left:1212px;top:514.7px" width="15" height="14.5" viewBox="0 0 15 14.5"><path d="M0.2 2.4 V9.8 C0.2 11.2 2.6 12 5 12 C7.4 12 9.8 11.2 9.8 9.8 V2.4 Z" fill="#12b4ee"/><path d="M5.4 2.4 V12 C7.6 11.9 9.8 11.1 9.8 9.8 V2.4 Z" fill="#5fd0f5"/><ellipse cx="5" cy="2.4" rx="4.8" ry="2.2" fill="#b8d432"/><ellipse cx="5" cy="2.3" rx="3.3" ry="1.3" fill="#c6de48"/><rect x="7.3" y="3.1" width="7.4" height="11.4" fill="#fff"/><path d="M7.9 3.7 H14.1 V6.9 L12.4 8.9 L14.1 10.9 V14.1 H7.9 V10.9 L9.6 8.9 L7.9 6.9 Z" fill="#a66bb6"/><path d="M9.2 13.0 C9.4 11.9 10.3 11.3 11.0 11.1 C11.7 11.3 12.6 11.9 12.8 13.0 L12.0 13.0 C11.8 12.4 11.4 12.1 11.0 12.0 C10.6 12.1 10.2 12.4 10.0 13.0 Z" fill="#fff" opacity=".85"/><rect x="9.0" y="4.4" width="4.0" height="0.9" fill="#fff" opacity=".75"/></svg>
<span class="t" style="left:1236.00px;top:518.00px;font-size:11px;color:#3a3a3a;transform:scaleX(0.8830);">IO_QUEUE_LIMIT</span>
<span class="t" style="left:1469.18px;top:518.00px;font-size:11px;color:#3a3a3a;transform:scaleX(0.9769);">1398</span>
<svg class="abs" style="left:1212px;top:542.7px" width="15" height="14.5" viewBox="0 0 15 14.5"><path d="M0.2 2.4 V9.8 C0.2 11.2 2.6 12 5 12 C7.4 12 9.8 11.2 9.8 9.8 V2.4 Z" fill="#12b4ee"/><path d="M5.4 2.4 V12 C7.6 11.9 9.8 11.1 9.8 9.8 V2.4 Z" fill="#5fd0f5"/><ellipse cx="5" cy="2.4" rx="4.8" ry="2.2" fill="#b8d432"/><ellipse cx="5" cy="2.3" rx="3.3" ry="1.3" fill="#c6de48"/><rect x="7.3" y="3.1" width="7.4" height="11.4" fill="#fff"/><path d="M7.9 3.7 H14.1 V6.9 L12.4 8.9 L14.1 10.9 V14.1 H7.9 V10.9 L9.6 8.9 L7.9 6.9 Z" fill="#a66bb6"/><path d="M9.2 13.0 C9.4 11.9 10.3 11.3 11.0 11.1 C11.7 11.3 12.6 11.9 12.8 13.0 L12.0 13.0 C11.8 12.4 11.4 12.1 11.0 12.0 C10.6 12.1 10.2 12.4 10.0 13.0 Z" fill="#fff" opacity=".85"/><rect x="9.0" y="4.4" width="4.0" height="0.9" fill="#fff" opacity=".75"/></svg>
<span class="t" style="left:1236.14px;top:546.00px;font-size:11px;color:#3a3a3a;transform:scaleX(0.8469);">PAGELATCH_EX</span>
<span class="t" style="left:1469.54px;top:546.00px;font-size:11px;color:#3a3a3a;transform:scaleX(0.9722);">862</span>
<svg class="abs" style="left:1212px;top:570.7px" width="15" height="14.5" viewBox="0 0 15 14.5"><path d="M0.2 2.4 V9.8 C0.2 11.2 2.6 12 5 12 C7.4 12 9.8 11.2 9.8 9.8 V2.4 Z" fill="#12b4ee"/><path d="M5.4 2.4 V12 C7.6 11.9 9.8 11.1 9.8 9.8 V2.4 Z" fill="#5fd0f5"/><ellipse cx="5" cy="2.4" rx="4.8" ry="2.2" fill="#b8d432"/><ellipse cx="5" cy="2.3" rx="3.3" ry="1.3" fill="#c6de48"/><rect x="7.3" y="3.1" width="7.4" height="11.4" fill="#fff"/><path d="M7.9 3.7 H14.1 V6.9 L12.4 8.9 L14.1 10.9 V14.1 H7.9 V10.9 L9.6 8.9 L7.9 6.9 Z" fill="#a66bb6"/><path d="M9.2 13.0 C9.4 11.9 10.3 11.3 11.0 11.1 C11.7 11.3 12.6 11.9 12.8 13.0 L12.0 13.0 C11.8 12.4 11.4 12.1 11.0 12.0 C10.6 12.1 10.2 12.4 10.0 13.0 Z" fill="#fff" opacity=".85"/><rect x="9.0" y="4.4" width="4.0" height="0.9" fill="#fff" opacity=".75"/></svg>
<span class="t" style="left:1236.48px;top:574.00px;font-size:11px;color:#3a3a3a;transform:scaleX(0.8330);">SLEEP_BUFFERPOOL_HELPLW</span>
<span class="t" style="left:1469.57px;top:574.00px;font-size:11px;color:#3a3a3a;transform:scaleX(0.9691);">571</span>
<span class="t" style="left:1350.47px;top:600.00px;font-size:11px;color:#444;transform:scaleX(0.9863);">1 of 4</span><svg class="abs" style="left:0;top:0" width="1" height="1"><path d="M1336.50 601.10 L1331.70 605.20 L1336.50 609.30" fill="none" stroke="#808080" stroke-width="1.5"/></svg><svg class="abs" style="left:0;top:0" width="1" height="1"><path d="M1393.20 601.10 L1398.00 605.20 L1393.20 609.30" fill="none" stroke="#3d84c6" stroke-width="1.5"/></svg>
<div class="panel" style="left:1544.5px;top:291px;width:319.5px;height:325px;"><div class="row" style="top:21px;width:319.5px"></div><div class="row" style="top:49px;width:319.5px"></div><div class="row" style="top:77px;width:319.5px"></div><div class="row" style="top:105px;width:319.5px"></div><div class="row" style="top:133px;width:319.5px"></div><div class="row" style="top:161px;width:319.5px"></div><div class="row" style="top:189px;width:319.5px"></div><div class="row" style="top:217px;width:319.5px"></div><div class="row" style="top:245px;width:319.5px"></div><div class="row" style="top:273px;width:319.5px"></div><div class="pager" style="top:301px;width:319.5px;height:23px"></div></div>
<svg class="abs" style="left:0;top:0" width="1" height="1"><path d="M1552.90 296.60 L1563.90 296.60 L1563.90 297.11 L1559.45 301.85 L1559.45 306.70 L1557.36 306.70 L1557.36 301.85 L1552.90 297.11 Z" fill="#575757"/></svg>
<span class="t" style="left:1577.23px;top:297.00px;font-size:10px;color:#757575;transform:scaleX(0.7661);">TIME</span>
<span class="t" style="left:1724.46px;top:297.00px;font-size:10px;color:#757575;transform:scaleX(0.7804);">EVENT</span>
<svg class="abs" style="left:1552.8px;top:318.7px" width="13" height="14.5" viewBox="0 0 13 14.5"><path d="M0.2 2.4 V9.8 C0.2 11.2 2.6 12 5.2 12 C7.8 12 10.2 11.2 10.2 9.8 V2.4 Z" fill="#12b4ee"/><path d="M5.6 2.4 V12 C7.9 11.9 10.2 11.1 10.2 9.8 V2.4 Z" fill="#5fd0f5"/><ellipse cx="5.2" cy="2.4" rx="5" ry="2.2" fill="#b8d432"/><ellipse cx="5.2" cy="2.3" rx="3.4" ry="1.3" fill="#c6de48"/><path d="M4.9 6.9 L11.9 13.9 M11.9 6.9 L4.9 13.9" stroke="#fff" stroke-width="4" stroke-linecap="butt"/><path d="M5.35 7.35 L11.45 13.45 M11.45 7.35 L5.35 13.45" stroke="#d9401a" stroke-width="2.4" stroke-linecap="butt"/></svg>
<span class="t" style="left:1576.39px;top:322.00px;font-size:11px;color:#3a3a3a;transform:scaleX(0.9695);">3/2/2018, 3:38:46 PM</span>
<span class="t" style="left:1724.53px;top:322.00px;font-size:11px;color:#3a3a3a;transform:scaleX(0.9673);">Error - 51102 - There are n...</span>
<svg class="abs" style="left:1552.8px;top:346.7px" width="13" height="14.5" viewBox="0 0 13 14.5"><path d="M0.2 2.4 V9.8 C0.2 11.2 2.6 12 5.2 12 C7.8 12 10.2 11.2 10.2 9.8 V2.4 Z" fill="#12b4ee"/><path d="M5.6 2.4 V12 C7.9 11.9 10.2 11.1 10.2 9.8 V2.4 Z" fill="#5fd0f5"/><ellipse cx="5.2" cy="2.4" rx="5" ry="2.2" fill="#b8d432"/><ellipse cx="5.2" cy="2.3" rx="3.4" ry="1.3" fill="#c6de48"/><path d="M4.9 6.9 L11.9 13.9 M11.9 6.9 L4.9 13.9" stroke="#fff" stroke-width="4" stroke-linecap="butt"/><path d="M5.35 7.35 L11.45 13.45 M11.45 7.35 L5.35 13.45" stroke="#d9401a" stroke-width="2.4" stroke-linecap="butt"/></svg>
<span class="t" style="left:1576.39px;top:350.00px;font-size:11px;color:#3a3a3a;transform:scaleX(0.9695);">3/2/2018, 3:38:00 PM</span>
<span class="t" style="left:1724.53px;top:350.00px;font-size:11px;color:#3a3a3a;transform:scaleX(0.9673);">Error - 51102 - There are n...</span>
<svg class="abs" style="left:1552.8px;top:374.7px" width="13" height="14.5" viewBox="0 0 13 14.5"><path d="M0.2 2.4 V9.8 C0.2 11.2 2.6 12 5.2 12 C7.8 12 10.2 11.2 10.2 9.8 V2.4 Z" fill="#12b4ee"/><path d="M5.6 2.4 V12 C7.9 11.9 10.2 11.1 10.2 9.8 V2.4 Z" fill="#5fd0f5"/><ellipse cx="5.2" cy="2.4" rx="5" ry="2.2" fill="#b8d432"/><ellipse cx="5.2" cy="2.3" rx="3.4" ry="1.3" fill="#c6de48"/><path d="M4.9 6.9 L11.9 13.9 M11.9 6.9 L4.9 13.9" stroke="#fff" stroke-width="4" stroke-linecap="butt"/><path d="M5.35 7.35 L11.45 13.45 M11.45 7.35 L5.35 13.45" stroke="#d9401a" stroke-width="2.4" stroke-linecap="butt"/></svg>
<span class="t" style="left:1576.39px;top:378.00px;font-size:11px;color:#3a3a3a;transform:scaleX(0.9695);">3/2/2018, 3:37:39 PM</span>
<span class="t" style="left:1724.53px;top:378.00px;font-size:11px;color:#3a3a3a;transform:scaleX(0.9673);">Error - 51102 - There are n...</span>
<svg class="abs" style="left:1552.8px;top:402.7px" width="13" height="14.5" viewBox="0 0 13 14.5"><path d="M0.2 2.4 V9.8 C0.2 11.2 2.6 12 5.2 12 C7.8 12 10.2 11.2 10.2 9.8 V2.4 Z" fill="#12b4ee"/><path d="M5.6 2.4 V12 C7.9 11.9 10.2 11.1 10.2 9.8 V2.4 Z" fill="#5fd0f5"/><ellipse cx="5.2" cy="2.4" rx="5" ry="2.2" fill="#b8d432"/><ellipse cx="5.2" cy="2.3" rx="3.4" ry="1.3" fill="#c6de48"/><path d="M4.9 6.9 L11.9 13.9 M11.9 6.9 L4.9 13.9" stroke="#fff" stroke-width="4" stroke-linecap="butt"/><path d="M5.35 7.35 L11.45 13.45 M11.45 7.35 L5.35 13.45" stroke="#d9401a" stroke-width="2.4" stroke-linecap="butt"/></svg>
<span class="t" style="left:1576.39px;top:406.00px;font-size:11px;color:#3a3a3a;transform:scaleX(0.9695);">3/2/2018, 3:36:53 PM</span>
<span class="t" style="left:1724.53px;top:406.00px;font-size:11px;color:#3a3a3a;transform:scaleX(0.9673);">Error - 51102 - There are n...</span>
<svg class="abs" style="left:1552.8px;top:430.7px" width="13" height="14.5" viewBox="0 0 13 14.5"><path d="M0.2 2.4 V9.8 C0.2 11.2 2.6 12 5.2 12 C7.8 12 10.2 11.2 10.2 9.8 V2.4 Z" fill="#12b4ee"/><path d="M5.6 2.4 V12 C7.9 11.9 10.2 11.1 10.2 9.8 V2.4 Z" fill="#5fd0f5"/><ellipse cx="5.2" cy="2.4" rx="5" ry="2.2" fill="#b8d432"/><ellipse cx="5.2" cy="2.3" rx="3.4" ry="1.3" fill="#c6de48"/><path d="M4.9 6.9 L11.9 13.9 M11.9 6.9 L4.9 13.9" stroke="#fff" stroke-width="4" stroke-linecap="butt"/><path d="M5.35 7.35 L11.45 13.45 M11.45 7.35 L5.35 13.45" stroke="#d9401a" stroke-width="2.4" stroke-linecap="butt"/></svg>
<span class="t" style="left:1576.39px;top:434.00px;font-size:11px;color:#3a3a3a;transform:scaleX(0.9695);">3/2/2018, 3:36:33 PM</span>
<span class="t" style="left:1724.53px;top:434.00px;font-size:11px;color:#3a3a3a;transform:scaleX(0.9673);">Error - 51102 - There are n...</span>
<svg class="abs" style="left:1552.8px;top:458.7px" width="13" height="14.5" viewBox="0 0 13 14.5"><path d="M0.2 2.4 V9.8 C0.2 11.2 2.6 12 5.2 12 C7.8 12 10.2 11.2 10.2 9.8 V2.4 Z" fill="#12b4ee"/><path d="M5.6 2.4 V12 C7.9 11.9 10.2 11.1 10.2 9.8 V2.4 Z" fill="#5fd0f5"/><ellipse cx="5.2" cy="2.4" rx="5" ry="2.2" fill="#b8d432"/><ellipse cx="5.2" cy="2.3" rx="3.4" ry="1.3" fill="#c6de48"/><path d="M4.9 6.9 L11.9 13.9 M11.9 6.9 L4.9 13.9" stroke="#fff" stroke-width="4" stroke-linecap="butt"/><path d="M5.35 7.35 L11.45 13.45 M11.45 7.35 L5.35 13.45" stroke="#d9401a" stroke-width="2.4" stroke-linecap="butt"/></svg>
<span class="t" style="left:1576.39px;top:462.00px;font-size:11px;color:#3a3a3a;transform:scaleX(0.9695);">3/2/2018, 3:35:47 PM</span>
<span class="t" style="left:1724.53px;top:462.00px;font-size:11px;color:#3a3a3a;transform:scaleX(0.9673);">Error - 51102 - There are n...</span>
<svg class="abs" style="left:1552.8px;top:486.7px" width="13" height="14.5" viewBox="0 0 13 14.5"><path d="M0.2 2.4 V9.8 C0.2 11.2 2.6 12 5.2 12 C7.8 12 10.2 11.2 10.2 9.8 V2.4 Z" fill="#12b4ee"/><path d="M5.6 2.4 V12 C7.9 11.9 10.2 11.1 10.2 9.8 V2.4 Z" fill="#5fd0f5"/><ellipse cx="5.2" cy="2.4" rx="5" ry="2.2" fill="#b8d432"/><ellipse cx="5.2" cy="2.3" rx="3.4" ry="1.3" fill="#c6de48"/><path d="M4.9 6.9 L11.9 13.9 M11.9 6.9 L4.9 13.9" stroke="#fff" stroke-width="4" stroke-linecap="butt"/><path d="M5.35 7.35 L11.45 13.45 M11.45 7.35 L5.35 13.45" stroke="#d9401a" stroke-width="2.4" stroke-linecap="butt"/></svg>
<span class="t" style="left:1576.39px;top:490.00px;font-size:11px;color:#3a3a3a;transform:scaleX(0.9695);">3/2/2018, 3:35:26 PM</span>
<span class="t" style="left:1724.53px;top:490.00px;font-size:11px;color:#3a3a3a;transform:scaleX(0.9673);">Error - 51102 - There are n...</span>
<svg class="abs" style="left:1552.8px;top:514.7px" width="13" height="14.5" viewBox="0 0 13 14.5"><path d="M0.2 2.4 V9.8 C0.2 11.2 2.6 12 5.2 12 C7.8 12 10.2 11.2 10.2 9.8 V2.4 Z" fill="#12b4ee"/><path d="M5.6 2.4 V12 C7.9 11.9 10.2 11.1 10.2 9.8 V2.4 Z" fill="#5fd0f5"/><ellipse cx="5.2" cy="2.4" rx="5" ry="2.2" fill="#b8d432"/><ellipse cx="5.2" cy="2.3" rx="3.4" ry="1.3" fill="#c6de48"/><path d="M4.9 6.9 L11.9 13.9 M11.9 6.9 L4.9 13.9" stroke="#fff" stroke-width="4" stroke-linecap="butt"/><path d="M5.35 7.35 L11.45 13.45 M11.45 7.35 L5.35 13.45" stroke="#d9401a" stroke-width="2.4" stroke-linecap="butt"/></svg>
<span class="t" style="left:1576.39px;top:518.00px;font-size:11px;color:#3a3a3a;transform:scaleX(0.9695);">3/2/2018, 3:34:40 PM</span>
<span class="t" style="left:1724.53px;top:518.00px;font-size:11px;color:#3a3a3a;transform:scaleX(0.9673);">Error - 51102 - There are n...</span>
<svg class="abs" style="left:1552.8px;top:542.7px" width="13" height="14.5" viewBox="0 0 13 14.5"><path d="M0.2 2.4 V9.8 C0.2 11.2 2.6 12 5.2 12 C7.8 12 10.2 11.2 10.2 9.8 V2.4 Z" fill="#12b4ee"/><path d="M5.6 2.4 V12 C7.9 11.9 10.2 11.1 10.2 9.8 V2.4 Z" fill="#5fd0f5"/><ellipse cx="5.2" cy="2.4" rx="5" ry="2.2" fill="#b8d432"/><ellipse cx="5.2" cy="2.3" rx="3.4" ry="1.3" fill="#c6de48"/><path d="M4.9 6.9 L11.9 13.9 M11.9 6.9 L4.9 13.9" stroke="#fff" stroke-width="4" stroke-linecap="butt"/><path d="M5.35 7.35 L11.45 13.45 M11.45 7.35 L5.35 13.45" stroke="#d9401a" stroke-width="2.4" stroke-linecap="butt"/></svg>
<span class="t" style="left:1576.39px;top:546.00px;font-size:11px;color:#3a3a3a;transform:scaleX(0.9695);">3/2/2018, 3:34:19 PM</span>
<span class="t" style="left:1724.53px;top:546.00px;font-size:11px;color:#3a3a3a;transform:scaleX(0.9673);">Error - 51102 - There are n...</span>
<svg class="abs" style="left:1552.8px;top:570.7px" width="13" height="14.5" viewBox="0 0 13 14.5"><path d="M0.2 2.4 V9.8 C0.2 11.2 2.6 12 5.2 12 C7.8 12 10.2 11.2 10.2 9.8 V2.4 Z" fill="#12b4ee"/><path d="M5.6 2.4 V12 C7.9 11.9 10.2 11.1 10.2 9.8 V2.4 Z" fill="#5fd0f5"/><ellipse cx="5.2" cy="2.4" rx="5" ry="2.2" fill="#b8d432"/><ellipse cx="5.2" cy="2.3" rx="3.4" ry="1.3" fill="#c6de48"/><path d="M4.9 6.9 L11.9 13.9 M11.9 6.9 L4.9 13.9" stroke="#fff" stroke-width="4" stroke-linecap="butt"/><path d="M5.35 7.35 L11.45 13.45 M11.45 7.35 L5.35 13.45" stroke="#d9401a" stroke-width="2.4" stroke-linecap="butt"/></svg>
<span class="t" style="left:1576.39px;top:574.00px;font-size:11px;color:#3a3a3a;transform:scaleX(0.9695);">3/2/2018, 3:33:33 PM</span>
<span class="t" style="left:1724.53px;top:574.00px;font-size:11px;color:#3a3a3a;transform:scaleX(0.9673);">Error - 51102 - There are n...</span>
<span class="t" style="left:1684.65px;top:600.00px;font-size:11px;color:#444;transform:scaleX(1.0200);">1 of 112</span><svg class="abs" style="left:0;top:0" width="1" height="1"><path d="M1670.50 601.10 L1665.70 605.20 L1670.50 609.30" fill="none" stroke="#808080" stroke-width="1.5"/></svg><svg class="abs" style="left:0;top:0" width="1" height="1"><path d="M1738.70 601.10 L1743.50 605.20 L1738.70 609.30" fill="none" stroke="#3d84c6" stroke-width="1.5"/></svg>
</div></body></html>
